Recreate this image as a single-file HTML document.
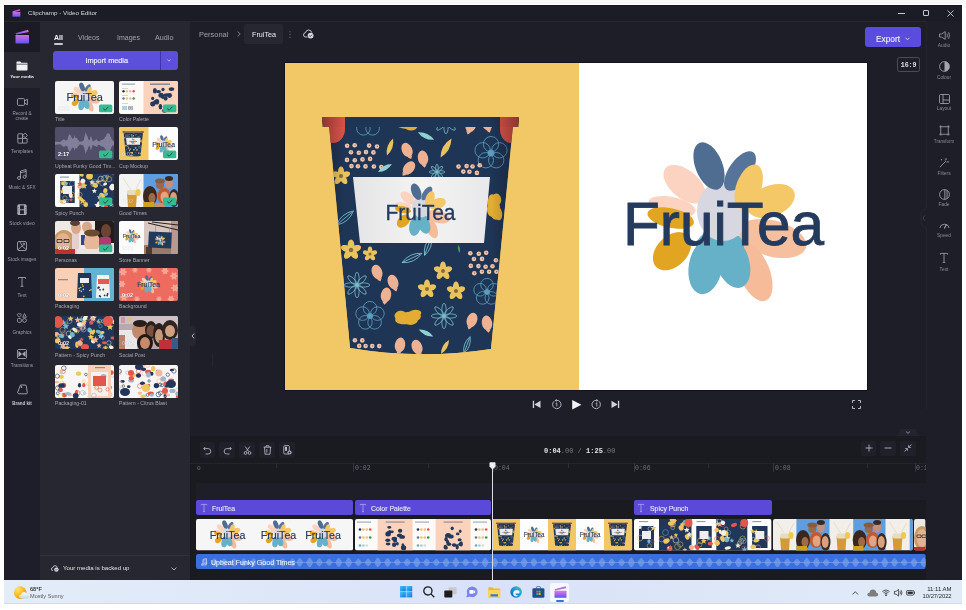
<!DOCTYPE html>
<html><head><meta charset="utf-8">
<style>
*{margin:0;padding:0;box-sizing:border-box}
html,body{width:966px;height:610px;overflow:hidden;background:#ffffff;font-family:"Liberation Sans",sans-serif;position:relative;-webkit-font-smoothing:antialiased}
.t{will-change:transform}
.a{position:absolute}
.t{position:absolute;white-space:nowrap;line-height:1}
svg{position:absolute;overflow:visible;will-change:transform}

</style></head><body>
<!-- window chrome -->
<div class="a" style="left:0;top:0;width:966px;height:4px;background:#f7f7f7"></div>
<div class="a" style="left:4px;top:5px;width:958px;height:575px;background:#1e1e29"></div>
<div class="a" style="left:4px;top:5px;width:958px;height:16px;background:#1c1c27;border-top:1px solid #15151f"></div>
<div class="a" style="left:4px;top:5px;width:1px;height:575px;background:#16161f"></div>
<div class="a" style="left:4px;top:21px;width:922px;height:1px;background:#272732"></div>
<!-- nav -->
<div class="a" style="left:4px;top:22px;width:36px;height:558px;background:#1e1e2a"></div>
<div class="a" style="left:4px;top:22px;width:36px;height:30px;background:#1b1b25"></div>
<div class="a" style="left:4px;top:52px;width:36px;height:36px;background:#282833"></div>
<!-- media panel -->
<div class="a" style="left:40px;top:22px;width:150px;height:558px;background:#272731"></div>
<div class="a" style="left:40px;top:555px;width:150px;height:1px;background:#32323c"></div>
<!-- right panel border -->

<!-- timeline bg -->
<div class="a" style="left:190px;top:436px;width:736px;height:144px;background:#1a1a21"></div>
<div class="a" style="left:190px;top:463px;width:736px;height:1px;background:#24242b"></div>
<!-- taskbar -->
<div class="a" style="left:4px;top:580px;width:958px;height:24px;background:linear-gradient(90deg,#e3edf8,#dde6f8 35%,#d8e1f8 50%,#dde6f7 70%,#e1ebf7);border-bottom:1px solid #d0daf0"></div>

<svg width="0" height="0" style="position:absolute;left:0;top:0"><defs>
<symbol id="flw" viewBox="-90 -90 180 180" overflow="visible">
<ellipse cx="-38.4" cy="-34.7" rx="25" ry="14" transform="rotate(40 -38.4 -34.7)" fill="#fbd3c0"/>
<ellipse cx="-51" cy="-12.5" rx="24" ry="9.5" transform="rotate(12 -51 -12.5)" fill="#fbd3c0"/>
<ellipse cx="49.4" cy="19.5" rx="34.8" ry="18" transform="rotate(15 49.4 19.5)" fill="#f6bf9e"/>
<ellipse cx="31.3" cy="53.1" rx="15.3" ry="30.7" transform="rotate(-22 31.3 53.1)" fill="#f6bb98"/>
<ellipse cx="-52.3" cy="-1" rx="23.7" ry="9.8" transform="rotate(12 -52.3 -1)" fill="#e1a521"/>
<ellipse cx="-51" cy="32.2" rx="15.3" ry="22.3" transform="rotate(45 -51 32.2)" fill="#e1a521"/>
<ellipse cx="-3" cy="28" rx="24" ry="18" fill="#66b0c8"/>
<ellipse cx="-17.5" cy="47.5" rx="16.7" ry="28" transform="rotate(10 -17.5 47.5)" fill="#66b0c8"/>
<ellipse cx="9" cy="42" rx="16.7" ry="28" transform="rotate(-20 9 42)" fill="#66b0c8"/>
<ellipse cx="0" cy="-8" rx="26" ry="30" fill="#d7d7e1"/>
<ellipse cx="-14" cy="-53" rx="13.5" ry="25" transform="rotate(-22 -14 -53)" fill="#4e6d90"/>
<ellipse cx="17" cy="-48" rx="11" ry="23" transform="rotate(35 17 -48)" fill="#56739a"/>
<ellipse cx="25.7" cy="-31.9" rx="12.5" ry="23.7" transform="rotate(20 25.7 -31.9)" fill="#f4c867"/>
<ellipse cx="48" cy="-18" rx="25" ry="15.3" transform="rotate(-22 48 -18)" fill="#f4c867"/>
</symbol>
<symbol id="logo" viewBox="-100 -90 200 180" overflow="visible"><use href="#flw" x="-90" y="-90" width="180" height="180"/><text x="-100" y="25.5" font-family="Liberation Sans" font-size="62" fill="#243b5e" stroke="#243b5e" stroke-width="0.9" textLength="201" lengthAdjust="spacingAndGlyphs">FruiTea</text></symbol>
<symbol id="cup" viewBox="320 115 202 240" overflow="visible"><clipPath id="cupclip"><path d="M329 126 L513 126 L491 349 Q420 360 350 348Z"/></clipPath><linearGradient id="cupshade" x1="0" x2="1"><stop offset="0" stop-color="#000" stop-opacity="0.35"/><stop offset="0.12" stop-color="#000" stop-opacity="0"/><stop offset="0.85" stop-color="#000" stop-opacity="0"/><stop offset="1" stop-color="#000" stop-opacity="0.35"/></linearGradient><linearGradient id="lblg" x1="0" x2="1"><stop offset="0" stop-color="#e4e4e6"/><stop offset="0.5" stop-color="#f4f4f4"/><stop offset="1" stop-color="#e8e8ea"/></linearGradient><g id="cupbody"><g clip-path="url(#cupclip)"><path d="M329 126 L513 126 L491 349 Q420 360 350 348Z" fill="#1f3556"/><ellipse cx="333" cy="129" rx="12" ry="14" fill="#d9534a"/><ellipse cx="511" cy="129" rx="11" ry="14" fill="#d9534a"/><g fill="none" stroke="#5c9cbc" stroke-width="0.85"><circle cx="368.0" cy="114.2" r="6.8"/><circle cx="375.4" cy="119.6" r="6.8"/><circle cx="372.6" cy="128.3" r="6.8"/><circle cx="363.4" cy="128.3" r="6.8"/><circle cx="360.6" cy="119.6" r="6.8"/><circle cx="368" cy="122" r="2.7" fill="#5c9cbc"/></g><g fill="#e2ad32" transform="rotate(0 408 123)"><ellipse cx="408" cy="123" rx="13" ry="6"/><ellipse cx="401" cy="119" rx="6" ry="4.5"/><ellipse cx="415" cy="120" rx="7" ry="4"/><ellipse cx="411" cy="127" rx="6" ry="3.5"/></g><g fill="none" stroke="#7cc0cc" stroke-width="0.8"><ellipse cx="452.5" cy="121.0" rx="6.2" ry="2.1" transform="rotate(0 452.5 121.0)"/><ellipse cx="450.6" cy="125.6" rx="6.2" ry="2.1" transform="rotate(45 450.6 125.6)"/><ellipse cx="446.0" cy="127.5" rx="6.2" ry="2.1" transform="rotate(90 446.0 127.5)"/><ellipse cx="441.4" cy="125.6" rx="6.2" ry="2.1" transform="rotate(135 441.4 125.6)"/><ellipse cx="439.5" cy="121.0" rx="6.2" ry="2.1" transform="rotate(180 439.5 121.0)"/><ellipse cx="441.4" cy="116.4" rx="6.2" ry="2.1" transform="rotate(225 441.4 116.4)"/><ellipse cx="446.0" cy="114.5" rx="6.2" ry="2.1" transform="rotate(270 446.0 114.5)"/><ellipse cx="450.6" cy="116.4" rx="6.2" ry="2.1" transform="rotate(315 450.6 116.4)"/><circle cx="446" cy="121" r="1.6"/></g><g transform="rotate(20 471 125)"><ellipse cx="471" cy="125" rx="5.2" ry="7.5" fill="#eeb293"/><path d="M468.5 132 L471 135 L473.5 132" fill="#eeb293"/></g><g transform="rotate(-15 487 123)"><ellipse cx="487" cy="123" rx="5.2" ry="7.5" fill="#eeb293"/><path d="M484.5 130 L487 133 L489.5 130" fill="#eeb293"/></g><path d="M417 136 Q426 131.05 435 136 Q426 140.95 417 136Z" transform="rotate(25 426 136)" fill="#8fd0d0"/><circle cx="347.1" cy="145.8" r="2.3" fill="#f2c4ac"/><circle cx="347.4" cy="145.6" r="0.7" fill="#9a7060"/><circle cx="354.7" cy="145.3" r="2.3" fill="#f2c4ac"/><circle cx="355.0" cy="145.1" r="0.7" fill="#9a7060"/><circle cx="369.1" cy="145.6" r="2.3" fill="#f2c4ac"/><circle cx="369.4" cy="145.4" r="0.7" fill="#9a7060"/><circle cx="377.0" cy="146.5" r="2.3" fill="#f2c4ac"/><circle cx="377.3" cy="146.3" r="0.7" fill="#9a7060"/><circle cx="351.0" cy="152.2" r="2.3" fill="#f2c4ac"/><circle cx="351.3" cy="152.0" r="0.7" fill="#9a7060"/><circle cx="358.8" cy="152.8" r="2.3" fill="#f2c4ac"/><circle cx="359.1" cy="152.6" r="0.7" fill="#9a7060"/><circle cx="366.0" cy="152.1" r="2.3" fill="#f2c4ac"/><circle cx="366.3" cy="151.9" r="0.7" fill="#9a7060"/><circle cx="373.4" cy="152.4" r="2.3" fill="#f2c4ac"/><circle cx="373.7" cy="152.2" r="0.7" fill="#9a7060"/><circle cx="347.0" cy="159.9" r="2.3" fill="#f2c4ac"/><circle cx="347.3" cy="159.7" r="0.7" fill="#9a7060"/><circle cx="354.8" cy="160.2" r="2.3" fill="#f2c4ac"/><circle cx="355.1" cy="160.0" r="0.7" fill="#9a7060"/><circle cx="362.5" cy="159.4" r="2.3" fill="#f2c4ac"/><circle cx="362.8" cy="159.2" r="0.7" fill="#9a7060"/><circle cx="370.1" cy="158.9" r="2.3" fill="#f2c4ac"/><circle cx="370.4" cy="158.7" r="0.7" fill="#9a7060"/><circle cx="351.5" cy="166.1" r="2.3" fill="#f2c4ac"/><circle cx="351.8" cy="165.9" r="0.7" fill="#9a7060"/><circle cx="357.9" cy="166.3" r="2.3" fill="#f2c4ac"/><circle cx="358.2" cy="166.1" r="0.7" fill="#9a7060"/><circle cx="365.5" cy="166.4" r="2.3" fill="#f2c4ac"/><circle cx="365.8" cy="166.2" r="0.7" fill="#9a7060"/><circle cx="373.9" cy="166.5" r="2.3" fill="#f2c4ac"/><circle cx="374.2" cy="166.3" r="0.7" fill="#9a7060"/><circle cx="381.3" cy="167.0" r="2.3" fill="#f2c4ac"/><circle cx="381.6" cy="166.8" r="0.7" fill="#9a7060"/><path d="M381 147 Q390 142.05 399 147 Q390 151.95 381 147Z" transform="rotate(-70 390 147)" fill="#e9c35c"/><g transform="rotate(-25 407 150)"><ellipse cx="407" cy="150" rx="5.2" ry="7.5" fill="#eeb293"/><path d="M404.5 157 L407 160 L409.5 157" fill="#eeb293"/></g><g transform="rotate(-10 423 158)"><ellipse cx="423" cy="158" rx="5.2" ry="7.5" fill="#eeb293"/><path d="M420.5 165 L423 168 L425.5 165" fill="#eeb293"/></g><g transform="rotate(40 409 168)"><ellipse cx="409" cy="168" rx="5.2" ry="7.5" fill="#eeb293"/><path d="M406.5 175 L409 178 L411.5 175" fill="#eeb293"/></g><path d="M435 148 Q446 141.95 457 148 Q446 154.05 435 148Z" transform="rotate(-60 446 148)" fill="#e9c35c"/><g fill="none" stroke="#5c9cbc" stroke-width="0.85"><circle cx="491.0" cy="144.2" r="7.7"/><circle cx="499.4" cy="150.3" r="7.7"/><circle cx="496.2" cy="160.2" r="7.7"/><circle cx="485.8" cy="160.2" r="7.7"/><circle cx="482.6" cy="150.3" r="7.7"/><circle cx="491" cy="153" r="3.1" fill="#5c9cbc"/></g><path d="M377 168 Q385 163.6 393 168 Q385 172.4 377 168Z" transform="rotate(-30 385 168)" fill="#8fd0d0"/><ellipse cx="341.0" cy="171.5" rx="5.0" ry="3.0" transform="rotate(-90 341.0 171.5)" fill="#e9c35c"/><ellipse cx="345.3" cy="174.6" rx="5.0" ry="3.0" transform="rotate(-18 345.3 174.6)" fill="#e9c35c"/><ellipse cx="343.6" cy="179.6" rx="5.0" ry="3.0" transform="rotate(54 343.6 179.6)" fill="#e9c35c"/><ellipse cx="338.4" cy="179.6" rx="5.0" ry="3.0" transform="rotate(126 338.4 179.6)" fill="#e9c35c"/><ellipse cx="336.7" cy="174.6" rx="5.0" ry="3.0" transform="rotate(198 336.7 174.6)" fill="#e9c35c"/><circle cx="341" cy="176" r="2.0" fill="#8a6a3a"/><circle cx="458.5" cy="166.6" r="2.3" fill="#f2c4ac"/><circle cx="458.8" cy="166.4" r="0.7" fill="#9a7060"/><circle cx="466.6" cy="166.1" r="2.3" fill="#f2c4ac"/><circle cx="466.9" cy="165.9" r="0.7" fill="#9a7060"/><circle cx="472.5" cy="166.5" r="2.3" fill="#f2c4ac"/><circle cx="472.8" cy="166.3" r="0.7" fill="#9a7060"/><circle cx="479.7" cy="165.3" r="2.3" fill="#f2c4ac"/><circle cx="480.0" cy="165.1" r="0.7" fill="#9a7060"/><circle cx="463.3" cy="171.6" r="2.3" fill="#f2c4ac"/><circle cx="463.6" cy="171.4" r="0.7" fill="#9a7060"/><circle cx="469.4" cy="171.7" r="2.3" fill="#f2c4ac"/><circle cx="469.7" cy="171.5" r="0.7" fill="#9a7060"/><circle cx="476.9" cy="172.9" r="2.3" fill="#f2c4ac"/><circle cx="477.2" cy="172.7" r="0.7" fill="#9a7060"/><g fill="none" stroke="#7cc0cc" stroke-width="0.8"><ellipse cx="441.0" cy="172.0" rx="3.8" ry="1.3" transform="rotate(0 441.0 172.0)"/><ellipse cx="439.8" cy="174.8" rx="3.8" ry="1.3" transform="rotate(45 439.8 174.8)"/><ellipse cx="437.0" cy="176.0" rx="3.8" ry="1.3" transform="rotate(90 437.0 176.0)"/><ellipse cx="434.2" cy="174.8" rx="3.8" ry="1.3" transform="rotate(135 434.2 174.8)"/><ellipse cx="433.0" cy="172.0" rx="3.8" ry="1.3" transform="rotate(180 433.0 172.0)"/><ellipse cx="434.2" cy="169.2" rx="3.8" ry="1.3" transform="rotate(225 434.2 169.2)"/><ellipse cx="437.0" cy="168.0" rx="3.8" ry="1.3" transform="rotate(270 437.0 168.0)"/><ellipse cx="439.8" cy="169.2" rx="3.8" ry="1.3" transform="rotate(315 439.8 169.2)"/><circle cx="437" cy="172" r="1.0"/></g><g fill="#e2ad32" transform="rotate(80 494 207)"><ellipse cx="494" cy="207" rx="13" ry="6"/><ellipse cx="487" cy="203" rx="6" ry="4.5"/><ellipse cx="501" cy="204" rx="7" ry="4"/><ellipse cx="497" cy="211" rx="6" ry="3.5"/></g><path d="M334 218 Q345 211.95 356 218 Q345 224.05 334 218Z M334 218 H353.8" transform="rotate(-40 345 218)" fill="none" stroke="#7cc0cc" stroke-width="0.8"/><ellipse cx="351.0" cy="245.0" rx="5.5" ry="3.3" transform="rotate(-90 351.0 245.0)" fill="#e9c35c"/><ellipse cx="355.8" cy="248.5" rx="5.5" ry="3.3" transform="rotate(-18 355.8 248.5)" fill="#e9c35c"/><ellipse cx="353.9" cy="254.0" rx="5.5" ry="3.3" transform="rotate(54 353.9 254.0)" fill="#e9c35c"/><ellipse cx="348.1" cy="254.0" rx="5.5" ry="3.3" transform="rotate(126 348.1 254.0)" fill="#e9c35c"/><ellipse cx="346.2" cy="248.5" rx="5.5" ry="3.3" transform="rotate(198 346.2 248.5)" fill="#e9c35c"/><circle cx="351" cy="250" r="2.2" fill="#8a6a3a"/><ellipse cx="370.0" cy="250.5" rx="3.9" ry="2.3" transform="rotate(-90 370.0 250.5)" fill="#e9c35c"/><ellipse cx="373.3" cy="252.9" rx="3.9" ry="2.3" transform="rotate(-18 373.3 252.9)" fill="#e9c35c"/><ellipse cx="372.1" cy="256.8" rx="3.9" ry="2.3" transform="rotate(54 372.1 256.8)" fill="#e9c35c"/><ellipse cx="367.9" cy="256.8" rx="3.9" ry="2.3" transform="rotate(126 367.9 256.8)" fill="#e9c35c"/><ellipse cx="366.7" cy="252.9" rx="3.9" ry="2.3" transform="rotate(198 366.7 252.9)" fill="#e9c35c"/><circle cx="370" cy="254" r="1.5" fill="#8a6a3a"/><path d="M401 258 Q412 251.95 423 258 Q412 264.05 401 258Z M401 258 H420.8" transform="rotate(-25 412 258)" fill="none" stroke="#7cc0cc" stroke-width="0.8"/><path d="M418 246 Q428 240.5 438 246 Q428 251.5 418 246Z M418 246 H436.0" transform="rotate(-70 428 246)" fill="none" stroke="#7cc0cc" stroke-width="0.8"/><path d="M455 249 Q459 246.8 463 249 Q459 251.2 455 249Z" transform="rotate(80 459 249)" fill="#3aa050"/><circle cx="470.3" cy="253.3" r="2.3" fill="#f2c4ac"/><circle cx="470.6" cy="253.1" r="0.7" fill="#9a7060"/><circle cx="478.8" cy="253.8" r="2.3" fill="#f2c4ac"/><circle cx="479.1" cy="253.6" r="0.7" fill="#9a7060"/><circle cx="486.2" cy="252.7" r="2.3" fill="#f2c4ac"/><circle cx="486.5" cy="252.5" r="0.7" fill="#9a7060"/><circle cx="473.9" cy="259.0" r="2.3" fill="#f2c4ac"/><circle cx="474.2" cy="258.8" r="0.7" fill="#9a7060"/><circle cx="482.0" cy="258.9" r="2.3" fill="#f2c4ac"/><circle cx="482.3" cy="258.7" r="0.7" fill="#9a7060"/><circle cx="495.9" cy="260.2" r="2.3" fill="#f2c4ac"/><circle cx="496.2" cy="260.0" r="0.7" fill="#9a7060"/><circle cx="470.8" cy="265.9" r="2.3" fill="#f2c4ac"/><circle cx="471.1" cy="265.7" r="0.7" fill="#9a7060"/><circle cx="478.4" cy="266.1" r="2.3" fill="#f2c4ac"/><circle cx="478.7" cy="265.9" r="0.7" fill="#9a7060"/><circle cx="485.6" cy="266.7" r="2.3" fill="#f2c4ac"/><circle cx="485.9" cy="266.5" r="0.7" fill="#9a7060"/><circle cx="492.5" cy="266.3" r="2.3" fill="#f2c4ac"/><circle cx="492.8" cy="266.1" r="0.7" fill="#9a7060"/><circle cx="474.3" cy="273.2" r="2.3" fill="#f2c4ac"/><circle cx="474.6" cy="273.0" r="0.7" fill="#9a7060"/><circle cx="481.9" cy="271.7" r="2.3" fill="#f2c4ac"/><circle cx="482.2" cy="271.5" r="0.7" fill="#9a7060"/><circle cx="489.1" cy="271.7" r="2.3" fill="#f2c4ac"/><circle cx="489.4" cy="271.5" r="0.7" fill="#9a7060"/><circle cx="496.4" cy="271.7" r="2.3" fill="#f2c4ac"/><circle cx="496.7" cy="271.5" r="0.7" fill="#9a7060"/><g transform="rotate(-20 377 272)"><ellipse cx="377" cy="272" rx="5.2" ry="7.5" fill="#eeb293"/><path d="M374.5 279 L377 282 L379.5 279" fill="#eeb293"/></g><g transform="rotate(-20 393 282)"><ellipse cx="393" cy="282" rx="5.2" ry="7.5" fill="#eeb293"/><path d="M390.5 289 L393 292 L395.5 289" fill="#eeb293"/></g><g transform="rotate(10 386 295)"><ellipse cx="386" cy="295" rx="5.2" ry="7.5" fill="#eeb293"/><path d="M383.5 302 L386 305 L388.5 302" fill="#eeb293"/></g><ellipse cx="443.0" cy="266.5" rx="5.0" ry="3.0" transform="rotate(-90 443.0 266.5)" fill="#e9c35c"/><ellipse cx="447.3" cy="269.6" rx="5.0" ry="3.0" transform="rotate(-18 447.3 269.6)" fill="#e9c35c"/><ellipse cx="445.6" cy="274.6" rx="5.0" ry="3.0" transform="rotate(54 445.6 274.6)" fill="#e9c35c"/><ellipse cx="440.4" cy="274.6" rx="5.0" ry="3.0" transform="rotate(126 440.4 274.6)" fill="#e9c35c"/><ellipse cx="438.7" cy="269.6" rx="5.0" ry="3.0" transform="rotate(198 438.7 269.6)" fill="#e9c35c"/><circle cx="443" cy="271" r="2.0" fill="#8a6a3a"/><ellipse cx="427.0" cy="284.5" rx="5.0" ry="3.0" transform="rotate(-90 427.0 284.5)" fill="#e9c35c"/><ellipse cx="431.3" cy="287.6" rx="5.0" ry="3.0" transform="rotate(-18 431.3 287.6)" fill="#e9c35c"/><ellipse cx="429.6" cy="292.6" rx="5.0" ry="3.0" transform="rotate(54 429.6 292.6)" fill="#e9c35c"/><ellipse cx="424.4" cy="292.6" rx="5.0" ry="3.0" transform="rotate(126 424.4 292.6)" fill="#e9c35c"/><ellipse cx="422.7" cy="287.6" rx="5.0" ry="3.0" transform="rotate(198 422.7 287.6)" fill="#e9c35c"/><circle cx="427" cy="289" r="2.0" fill="#8a6a3a"/><ellipse cx="456.0" cy="286.5" rx="5.0" ry="3.0" transform="rotate(-90 456.0 286.5)" fill="#e9c35c"/><ellipse cx="460.3" cy="289.6" rx="5.0" ry="3.0" transform="rotate(-18 460.3 289.6)" fill="#e9c35c"/><ellipse cx="458.6" cy="294.6" rx="5.0" ry="3.0" transform="rotate(54 458.6 294.6)" fill="#e9c35c"/><ellipse cx="453.4" cy="294.6" rx="5.0" ry="3.0" transform="rotate(126 453.4 294.6)" fill="#e9c35c"/><ellipse cx="451.7" cy="289.6" rx="5.0" ry="3.0" transform="rotate(198 451.7 289.6)" fill="#e9c35c"/><circle cx="456" cy="291" r="2.0" fill="#8a6a3a"/><g fill="none" stroke="#7cc0cc" stroke-width="0.8"><ellipse cx="363.5" cy="285.0" rx="6.2" ry="2.1" transform="rotate(0 363.5 285.0)"/><ellipse cx="361.6" cy="289.6" rx="6.2" ry="2.1" transform="rotate(45 361.6 289.6)"/><ellipse cx="357.0" cy="291.5" rx="6.2" ry="2.1" transform="rotate(90 357.0 291.5)"/><ellipse cx="352.4" cy="289.6" rx="6.2" ry="2.1" transform="rotate(135 352.4 289.6)"/><ellipse cx="350.5" cy="285.0" rx="6.2" ry="2.1" transform="rotate(180 350.5 285.0)"/><ellipse cx="352.4" cy="280.4" rx="6.2" ry="2.1" transform="rotate(225 352.4 280.4)"/><ellipse cx="357.0" cy="278.5" rx="6.2" ry="2.1" transform="rotate(270 357.0 278.5)"/><ellipse cx="361.6" cy="280.4" rx="6.2" ry="2.1" transform="rotate(315 361.6 280.4)"/><circle cx="357" cy="285" r="1.6"/></g><g fill="none" stroke="#5c9cbc" stroke-width="0.85"><circle cx="487.0" cy="284.7" r="6.3"/><circle cx="493.9" cy="289.8" r="6.3"/><circle cx="491.3" cy="297.9" r="6.3"/><circle cx="482.7" cy="297.9" r="6.3"/><circle cx="480.1" cy="289.8" r="6.3"/><circle cx="487" cy="292" r="2.5" fill="#5c9cbc"/></g><g fill="none" stroke="#5c9cbc" stroke-width="0.85"><circle cx="370.0" cy="308.2" r="6.8"/><circle cx="377.4" cy="313.6" r="6.8"/><circle cx="374.6" cy="322.3" r="6.8"/><circle cx="365.4" cy="322.3" r="6.8"/><circle cx="362.6" cy="313.6" r="6.8"/><circle cx="370" cy="316" r="2.7" fill="#5c9cbc"/></g><g fill="#e2ad32" transform="rotate(-10 408 318)"><ellipse cx="408" cy="318" rx="13" ry="6"/><ellipse cx="401" cy="314" rx="6" ry="4.5"/><ellipse cx="415" cy="315" rx="7" ry="4"/><ellipse cx="411" cy="322" rx="6" ry="3.5"/></g><g fill="none" stroke="#7cc0cc" stroke-width="0.8"><ellipse cx="450.5" cy="316.0" rx="6.2" ry="2.1" transform="rotate(0 450.5 316.0)"/><ellipse cx="448.6" cy="320.6" rx="6.2" ry="2.1" transform="rotate(45 448.6 320.6)"/><ellipse cx="444.0" cy="322.5" rx="6.2" ry="2.1" transform="rotate(90 444.0 322.5)"/><ellipse cx="439.4" cy="320.6" rx="6.2" ry="2.1" transform="rotate(135 439.4 320.6)"/><ellipse cx="437.5" cy="316.0" rx="6.2" ry="2.1" transform="rotate(180 437.5 316.0)"/><ellipse cx="439.4" cy="311.4" rx="6.2" ry="2.1" transform="rotate(225 439.4 311.4)"/><ellipse cx="444.0" cy="309.5" rx="6.2" ry="2.1" transform="rotate(270 444.0 309.5)"/><ellipse cx="448.6" cy="311.4" rx="6.2" ry="2.1" transform="rotate(315 448.6 311.4)"/><circle cx="444" cy="316" r="1.6"/></g><g transform="rotate(20 472 320)"><ellipse cx="472" cy="320" rx="5.2" ry="7.5" fill="#eeb293"/><path d="M469.5 327 L472 330 L474.5 327" fill="#eeb293"/></g><g transform="rotate(-10 487 323)"><ellipse cx="487" cy="323" rx="5.2" ry="7.5" fill="#eeb293"/><path d="M484.5 330 L487 333 L489.5 330" fill="#eeb293"/></g><circle cx="354.9" cy="340.3" r="2.3" fill="#f2c4ac"/><circle cx="355.2" cy="340.1" r="0.7" fill="#9a7060"/><circle cx="362.3" cy="340.4" r="2.3" fill="#f2c4ac"/><circle cx="362.6" cy="340.2" r="0.7" fill="#9a7060"/><circle cx="359.2" cy="345.9" r="2.3" fill="#f2c4ac"/><circle cx="359.5" cy="345.7" r="0.7" fill="#9a7060"/><circle cx="365.6" cy="346.0" r="2.3" fill="#f2c4ac"/><circle cx="365.9" cy="345.8" r="0.7" fill="#9a7060"/><circle cx="372.2" cy="346.1" r="2.3" fill="#f2c4ac"/><circle cx="372.5" cy="345.9" r="0.7" fill="#9a7060"/><circle cx="379.2" cy="346.1" r="2.3" fill="#f2c4ac"/><circle cx="379.5" cy="345.9" r="0.7" fill="#9a7060"/><g transform="rotate(10 400 345)"><ellipse cx="400" cy="345" rx="5.2" ry="7.5" fill="#eeb293"/><path d="M397.5 352 L400 355 L402.5 352" fill="#eeb293"/></g><g transform="rotate(-20 417 347)"><ellipse cx="417" cy="347" rx="5.2" ry="7.5" fill="#eeb293"/><path d="M414.5 354 L417 357 L419.5 354" fill="#eeb293"/></g><path d="M418 333 Q426 328.6 434 333 Q426 337.4 418 333Z" transform="rotate(25 426 333)" fill="#8fd0d0"/><path d="M437 347 Q445 342.6 453 347 Q445 351.4 437 347Z" transform="rotate(-60 445 347)" fill="#e9c35c"/><path d="M458 345 Q467 340.05 476 345 Q467 349.95 458 345Z M458 345 H474.2" transform="rotate(-70 467 345)" fill="none" stroke="#7cc0cc" stroke-width="0.8"/><rect x="320" y="115" width="202" height="245" fill="url(#cupshade)"/></g><path d="M322 119 Q322 117 324 117 L517 117 Q519 117 519 119 L518 125 Q518 127 516 127 L326 127 Q323 127 323 125Z" fill="#1f3556"/><path d="M322 119 Q322 117 324 117 L345 117 L345 127 L326 127 Q323 127 323 125Z" fill="#d9534a"/><path d="M500 117 L517 117 Q519 117 519 119 L518 125 Q518 127 516 127 L500 127Z" fill="#d9534a"/><rect x="322" y="117" width="197" height="10" fill="url(#cupshade)"/><path d="M353 177 L490 177 L484 243 L360 243Z" fill="url(#lblg)"/><use href="#flw" x="390" y="179" width="62" height="62"/><text x="385.5" y="220.3" font-family="Liberation Sans" font-size="22.5" fill="#243b5e" stroke="#243b5e" stroke-width="0.3" textLength="70" lengthAdjust="spacingAndGlyphs">FruiTea</text></g></symbol>
</defs></svg>
<!-- title bar content -->
<svg style="left:12px;top:9px" width="9" height="8" viewBox="0 0 9 8">
  <defs><linearGradient id="lg1" x1="0" y1="0" x2="0" y2="1"><stop offset="0" stop-color="#d26be6"/><stop offset="1" stop-color="#6b55f0"/></linearGradient></defs>
  <path d="M0.5 2.2 L7.8 0.3 L8.3 1.6 L1 3.4Z" fill="#c46ae8"/>
  <rect x="0.5" y="3" width="7.8" height="4.7" fill="url(#lg1)"/>
</svg>
<div class="t" style="left:28px;top:10px;font-size:6.25px;color:#d8d8de">Clipchamp - Video Editor</div>
<div class="a" style="left:898px;top:12.5px;width:7px;height:1px;background:#c8c8d0"></div>
<div class="a" style="left:923px;top:10px;width:6px;height:6px;border:1px solid #c8c8d0;border-radius:1px"></div>
<svg style="left:947px;top:10px" width="7" height="7" viewBox="0 0 7 7"><path d="M0.5 0.5L6.5 6.5M6.5 0.5L0.5 6.5" stroke="#d0d0d8" stroke-width="0.9"/></svg>

<!-- nav logo -->
<svg style="left:15px;top:29px" width="15" height="15" viewBox="0 0 15 15">
  <defs><linearGradient id="lg2" x1="0" y1="0" x2="0" y2="1"><stop offset="0" stop-color="#c86fe0"/><stop offset="0.5" stop-color="#a060e8"/><stop offset="1" stop-color="#5e54ee"/></linearGradient>
  <linearGradient id="lg3" x1="0" y1="0" x2="1" y2="0"><stop offset="0" stop-color="#7a58ea"/><stop offset="1" stop-color="#d070e6"/></linearGradient></defs>
  <path d="M0.5 4.2 L13 0.8 L13.8 3 L1.2 5.6Z" fill="url(#lg3)"/>
  <rect x="0.5" y="6" width="13.5" height="8.5" rx="0.6" fill="url(#lg2)"/>
</svg>

<!-- your media -->
<svg style="left:16px;top:61px" width="12" height="10" viewBox="0 0 12 10">
  <path d="M0.5 1.2 Q0.5 0.5 1.2 0.5 H4.3 L5.5 1.8 H10.8 Q11.5 1.8 11.5 2.5 V8.8 Q11.5 9.5 10.8 9.5 H1.2 Q0.5 9.5 0.5 8.8Z" fill="#f2f2f6"/>
  <path d="M0.5 3.2 H11.5" stroke="#282833" stroke-width="0.7"/>
</svg>
<div class="t" style="left:9px;top:74.6px;width:26px;text-align:center;font-size:4.4px;font-weight:700;color:#f0f0f4">Your media</div>

<!-- record -->
<svg style="left:16.5px;top:97.5px" width="11" height="8" viewBox="0 0 11 8" fill="none" stroke="#a9a9b5" stroke-width="0.85">
  <rect x="0.5" y="0.6" width="7" height="6.8" rx="1"/>
  <path d="M7.5 3 L10.4 1.2 V6.8 L7.5 5"/>
</svg>
<div class="t" style="left:4px;top:111.7px;width:36px;text-align:center;font-size:4.6px;color:#9c9ca8">Record &amp;</div>
<div class="t" style="left:4px;top:116.5px;width:36px;text-align:center;font-size:4.6px;color:#9c9ca8">create</div>

<!-- templates -->
<svg style="left:16.5px;top:133px" width="11" height="11" viewBox="0 0 11 11" fill="none" stroke="#a9a9b5" stroke-width="0.85">
  <path d="M1.6 0.8 H5.5 V5.4 H10.1 V9.3 Q10.1 10.1 9.3 10.1 H1.6 Q0.8 10.1 0.8 9.3 V1.6 Q0.8 0.8 1.6 0.8Z M0.8 5.4 H5.5 V10.1"/>
  <path d="M8.1 0.1 L10.4 2.4 L8.1 4.7 L5.8 2.4Z"/>
</svg>
<div class="t" style="left:4px;top:149.9px;width:36px;text-align:center;font-size:4.8px;color:#9c9ca8">Templates</div>

<!-- music -->
<svg style="left:17px;top:168.5px" width="10" height="11" viewBox="0 0 10 11" fill="none" stroke="#a9a9b5" stroke-width="0.85">
  <circle cx="2" cy="9" r="1.5"/><circle cx="7.6" cy="7.8" r="1.5"/>
  <path d="M3.5 9 V2 L9.1 0.6 V7.8 M3.5 3.8 L9.1 2.4"/>
</svg>
<div class="t" style="left:4px;top:186.2px;width:36px;text-align:center;font-size:4.7px;color:#9c9ca8">Music &amp; SFX</div>

<!-- stock video -->
<svg style="left:17px;top:204px" width="10" height="11.5" viewBox="0 0 10 11.5">
  <rect x="0.3" y="0.3" width="9.4" height="10.8" rx="1.6" fill="#a9a9b5"/>
  <rect x="3.1" y="1.4" width="3.8" height="3.9" fill="#1e1e2a"/><rect x="3.1" y="6.2" width="3.8" height="3.9" fill="#1e1e2a"/>
  <path d="M0.6 3.5 H2.2 M0.6 5.7 H2.2 M0.6 7.9 H2.2 M7.8 3.5 H9.4 M7.8 5.7 H9.4 M7.8 7.9 H9.4" stroke="#5a5a66" stroke-width="0.5"/>
</svg>
<div class="t" style="left:4px;top:221.8px;width:36px;text-align:center;font-size:4.9px;color:#9c9ca8">Stock video</div>

<!-- stock images -->
<svg style="left:17px;top:240.7px" width="10" height="10" viewBox="0 0 10 10" fill="none" stroke="#a9a9b5" stroke-width="0.85">
  <rect x="0.5" y="0.5" width="9" height="9" rx="1.5"/>
  <path d="M0.8 8.8 L5 5 L9.2 8.5"/><circle cx="6.8" cy="3" r="0.9"/>
  <path d="M3 1 L5.5 5"/>
</svg>
<div class="t" style="left:4px;top:257.5px;width:36px;text-align:center;font-size:4.8px;color:#9c9ca8">Stock images</div>

<!-- text -->
<svg style="left:18px;top:277px" width="8" height="10" viewBox="0 0 8 10" fill="none" stroke="#a9a9b5" stroke-width="0.85">
  <path d="M0.5 1.8 V0.5 H7.5 V1.8 M4 0.5 V9.3 M2.6 9.3 H5.4"/>
</svg>
<div class="t" style="left:4px;top:293.6px;width:36px;text-align:center;font-size:4.9px;color:#9c9ca8">Text</div>

<!-- graphics -->
<svg style="left:17px;top:312.5px" width="10" height="10" viewBox="0 0 10 10" fill="none" stroke="#a9a9b5" stroke-width="0.8">
  <path d="M2.3 4.2 L0.6 2.3 A1 1 0 0 1 2.3 1 A1 1 0 0 1 4 2.3Z"/>
  <path d="M7.5 0.6 L9.3 4.2 H5.7Z"/>
  <rect x="0.5" y="5.5" width="3.8" height="3.8" rx="1"/>
  <circle cx="7.5" cy="7.4" r="1.9"/>
</svg>
<div class="t" style="left:4px;top:330.6px;width:36px;text-align:center;font-size:4.8px;color:#9c9ca8">Graphics</div>

<!-- transitions -->
<svg style="left:17px;top:348.5px" width="10" height="10" viewBox="0 0 10 10">
  <rect x="0.5" y="0.5" width="9" height="9" rx="1" fill="none" stroke="#a9a9b5" stroke-width="0.85"/>
  <path d="M1.5 2 L5 5 L1.5 8Z M8.5 2 L5 5 L8.5 8Z" fill="#a9a9b5"/>
</svg>
<div class="t" style="left:4px;top:363.6px;width:36px;text-align:center;font-size:4.6px;color:#9c9ca8">Transitions</div>

<!-- brand kit -->
<svg style="left:16.5px;top:384px" width="11" height="11" viewBox="0 0 11 11" fill="none" stroke="#b4b4c0" stroke-width="0.85">
  <path d="M3.5 1 H8.2 Q9 1 9.3 2 L10.3 8.8 Q10.3 9.8 9.3 9.8 H4 Q3.2 9.8 3.1 9"/>
  <path d="M3.5 1 L0.7 8.3 Q0.5 9.3 1.5 9.6 L3.1 10"/>
  <circle cx="4.5" cy="3" r="0.5" fill="#b4b4c0"/>
</svg>
<div class="t" style="left:4px;top:402.4px;width:36px;text-align:center;font-size:4.5px;font-weight:700;color:#c8c8d2">Brand kit</div>

<div class="t" style="left:54px;top:33.8px;font-size:7px;font-weight:700;color:#f2f2f6">All</div>
<div class="a" style="left:54px;top:43px;width:8.5px;height:1.5px;border-radius:1px;background:#c9c9d2"></div>
<div class="t" style="left:78.4px;top:33.8px;font-size:7.05px;color:#a3a3ae">Videos</div>
<div class="t" style="left:117px;top:33.8px;font-size:7px;color:#a3a3ae">Images</div>
<div class="t" style="left:155px;top:33.8px;font-size:7.2px;color:#a3a3ae">Audio</div>
<div class="a" style="left:52.5px;top:50.7px;width:125.2px;height:19.8px;border-radius:3px;background:#5b4fdb"></div>
<div class="a" style="left:160px;top:50.7px;width:0.8px;height:19.8px;background:#3f35a8"></div>
<div class="t" style="left:52.5px;top:56.6px;width:107.5px;text-align:center;font-size:7.3px;color:#f4f4fb;-webkit-text-stroke:0.15px #f4f4fb">Import media</div>
<svg style="left:166.5px;top:59px" width="4" height="3" viewBox="0 0 4 3"><path d="M0.4 0.5 L2 2.2 L3.6 0.5" fill="none" stroke="#e8e8f4" stroke-width="0.7"/></svg>
<svg style="left:55.3px;top:80.5px" width="59" height="33" viewBox="0 0 59 33"><defs><clipPath id="tc0"><rect width="59" height="33" rx="2"/></clipPath></defs><g clip-path="url(#tc0)"><rect width="59" height="33" fill="#f6f6f6"/><use href="#logo" x="11.46" y="-0.73" width="36.29" height="32.66"/><text x="3" y="29.3" font-family="Liberation Sans" font-size="5.6" font-weight="700" fill="#ffffff" opacity="0.35" style="paint-order:stroke" stroke="#000" stroke-opacity="0.25" stroke-width="0.6">0:02</text><rect x="44" y="23.6" width="13.3" height="7.7" rx="1.6" fill="#33bb92"/><path d="M48.2 27.6 L50.1 29.3 L53.4 25.7" fill="none" stroke="#1b3a30" stroke-width="0.8"/></g></svg>
<div class="t" style="left:55.3px;top:116.7px;font-size:5.2px;color:#a7a7b3">Title</div>
<svg style="left:119.4px;top:80.5px" width="59" height="33" viewBox="0 0 59 33"><defs><clipPath id="tc1"><rect width="59" height="33" rx="2"/></clipPath></defs><g clip-path="url(#tc1)"><rect width="59" height="33" fill="#fdfaf7"/><rect x="24.5" width="35" height="33" fill="#fbd2bc"/><rect x="3" y="2.5" width="13" height="1.3" fill="#9bb0c8"/><rect x="31" y="2.5" width="20" height="1.3" fill="#6c7e9a"/><rect x="3" y="7" width="6" height="0.8" fill="#c8ccd6"/><circle cx="4.5" cy="10.3" r="1.2" fill="#20365a"/><circle cx="7.9" cy="10.3" r="1.2" fill="#efc75e"/><circle cx="11.3" cy="10.3" r="1.2" fill="#f4b89a"/><circle cx="14.7" cy="10.3" r="1.2" fill="#e2574a"/><rect x="3" y="14" width="6" height="0.8" fill="#c8ccd6"/><circle cx="4.5" cy="17.5" r="1.2" fill="#5a7aa0"/><circle cx="7.9" cy="17.5" r="1.2" fill="#efc75e"/><circle cx="11.3" cy="17.5" r="1.2" fill="#f4b89a"/><circle cx="14.7" cy="17.5" r="1.2" fill="#2f9a4a"/><rect x="3" y="22" width="6" height="0.8" fill="#c8ccd6"/><rect x="3" y="25" width="5" height="4" fill="#6fb3cc" opacity="0.6"/><rect x="9" y="25" width="5" height="4" fill="#20365a" opacity="0.4"/><ellipse cx="39.5" cy="10.6" rx="2.5" ry="1.6" fill="#22385c"/><ellipse cx="43.7" cy="15.8" rx="1.6" ry="2.3" fill="#22385c"/><ellipse cx="33.7" cy="17.4" rx="1.6" ry="1.6" fill="#22385c"/><ellipse cx="41.5" cy="26.8" rx="1.7" ry="1.8" fill="#22385c"/><ellipse cx="45.5" cy="29.7" rx="2.4" ry="2.1" fill="#22385c"/><ellipse cx="52.5" cy="8.1" rx="2.8" ry="1.9" fill="#22385c"/><ellipse cx="35.9" cy="9.8" rx="2.0" ry="2.7" fill="#22385c"/><ellipse cx="36.6" cy="21.0" rx="2.5" ry="2.1" fill="#22385c"/><ellipse cx="44.0" cy="8.5" rx="1.6" ry="1.8" fill="#22385c"/><ellipse cx="46.6" cy="17.3" rx="2.0" ry="2.4" fill="#22385c"/><ellipse cx="42.1" cy="14.2" rx="2.7" ry="2.5" fill="#22385c"/><ellipse cx="37.9" cy="20.8" rx="2.3" ry="2.8" fill="#22385c"/><ellipse cx="47.6" cy="13.9" rx="3.0" ry="1.7" fill="#22385c"/><ellipse cx="41.4" cy="25.2" rx="1.7" ry="2.2" fill="#22385c"/><ellipse cx="33.8" cy="23.0" rx="2.6" ry="2.4" fill="#22385c"/><ellipse cx="50.5" cy="14.5" rx="2.5" ry="2.4" fill="#22385c"/><text x="3" y="29.3" font-family="Liberation Sans" font-size="5.6" font-weight="700" fill="#ffffff" opacity="0.35" style="paint-order:stroke" stroke="#000" stroke-opacity="0.25" stroke-width="0.6">0:02</text><rect x="44" y="23.6" width="13.3" height="7.7" rx="1.6" fill="#33bb92"/><path d="M48.2 27.6 L50.1 29.3 L53.4 25.7" fill="none" stroke="#1b3a30" stroke-width="0.8"/></g></svg>
<div class="t" style="left:119.4px;top:116.7px;font-size:5.2px;color:#a7a7b3">Color Palette</div>
<svg style="left:55.3px;top:127.1px" width="59" height="33" viewBox="0 0 59 33"><defs><clipPath id="tc2"><rect width="59" height="33" rx="2"/></clipPath></defs><g clip-path="url(#tc2)"><rect width="59" height="33" fill="#504e69"/><polygon points="0.0,14.8 0.5,14.4 1.0,14.7 1.5,15.0 2.0,14.5 2.5,14.7 3.0,14.8 3.5,15.1 4.0,15.1 4.5,14.9 5.0,15.0 5.5,14.6 6.0,14.8 6.5,14.0 7.0,13.4 7.5,13.5 8.0,12.5 8.5,12.5 9.0,12.6 9.5,12.5 10.0,12.9 10.5,13.5 11.0,13.5 11.5,13.2 12.0,13.1 12.5,12.8 13.0,10.5 13.5,8.8 14.0,8.3 14.5,6.8 15.0,7.9 15.5,7.9 16.0,9.1 16.5,10.4 17.0,11.2 17.5,11.4 18.0,12.0 18.5,11.1 19.0,10.5 19.5,8.0 20.0,9.5 20.5,11.0 21.0,11.1 21.5,11.1 22.0,10.6 22.5,12.0 23.0,13.0 23.5,13.1 24.0,13.9 24.5,14.8 25.0,14.8 25.5,14.6 26.0,15.0 26.5,14.4 27.0,14.3 27.5,14.1 28.0,14.0 28.5,13.5 29.0,12.1 29.5,9.6 30.0,7.9 30.5,5.0 31.0,6.2 31.5,7.5 32.0,8.8 32.5,9.0 33.0,11.4 33.5,12.5 34.0,13.7 34.5,12.8 35.0,11.9 35.5,10.0 36.0,9.1 36.5,10.3 37.0,11.7 37.5,13.7 38.0,14.6 38.5,13.9 39.0,14.0 39.5,13.2 40.0,13.1 40.5,13.4 41.0,12.2 41.5,12.3 42.0,12.8 42.5,13.6 43.0,14.2 43.5,14.3 44.0,14.5 44.5,14.3 45.0,14.2 45.5,13.4 46.0,13.0 46.5,12.9 47.0,13.1 47.5,12.8 48.0,12.3 48.5,12.4 49.0,11.7 49.5,11.4 50.0,10.1 50.5,9.8 51.0,9.4 51.5,7.7 52.0,6.4 52.5,6.6 53.0,6.4 53.5,6.1 54.0,7.1 54.5,6.8 55.0,7.9 55.5,10.0 56.0,10.1 56.5,12.0 57.0,12.8 57.5,13.6 58.0,13.8 58.5,13.7 59.0,14.4 59.0,17.9 58.5,18.6 58.0,18.4 57.5,18.6 57.0,19.4 56.5,20.1 56.0,22.0 55.5,22.1 55.0,24.1 54.5,25.1 54.0,24.9 53.5,25.8 53.0,25.5 52.5,25.3 52.0,25.5 51.5,24.3 51.0,22.7 50.5,22.3 50.0,22.0 49.5,20.7 49.0,20.5 48.5,19.8 48.0,19.9 47.5,19.4 47.0,19.2 46.5,19.4 46.0,19.3 45.5,18.9 45.0,18.1 44.5,18.0 44.0,17.8 43.5,18.0 43.0,18.1 42.5,18.7 42.0,19.4 41.5,19.9 41.0,20.0 40.5,18.9 40.0,19.1 39.5,19.1 39.0,18.3 38.5,18.4 38.0,17.7 37.5,18.5 37.0,20.5 36.5,21.8 36.0,23.0 35.5,22.1 35.0,20.3 34.5,19.4 34.0,18.6 33.5,19.7 33.0,20.7 32.5,23.0 32.0,23.2 31.5,24.5 31.0,25.7 30.5,26.9 30.0,24.1 29.5,22.5 29.0,20.1 28.5,18.8 28.0,18.3 27.5,18.2 27.0,18.0 26.5,18.0 26.0,17.4 25.5,17.7 25.0,17.5 24.5,17.6 24.0,18.4 23.5,19.1 23.0,19.2 22.5,20.2 22.0,21.5 21.5,21.0 21.0,21.1 20.5,21.1 20.0,22.6 19.5,24.0 19.0,21.6 18.5,21.0 18.0,20.2 17.5,20.7 17.0,20.9 16.5,21.7 16.0,22.9 15.5,24.0 15.0,24.1 14.5,25.2 14.0,23.7 13.5,23.2 13.0,21.6 12.5,19.4 12.0,19.1 11.5,19.1 11.0,18.7 10.5,18.8 10.0,19.3 9.5,19.7 9.0,19.6 8.5,19.7 8.0,19.8 7.5,18.8 7.0,18.9 6.5,18.3 6.0,17.6 5.5,17.7 5.0,17.3 4.5,17.4 4.0,17.2 3.5,17.3 3.0,17.5 2.5,17.6 2.0,17.8 1.5,17.4 1.0,17.6 0.5,17.9 0.0,17.6" fill="#8a88a2" opacity="0.85"/><text x="3" y="29.3" font-family="Liberation Sans" font-size="5.6" font-weight="700" fill="#ffffff" opacity="1" style="paint-order:stroke" stroke="#000" stroke-opacity="0.25" stroke-width="0.6">2:17</text><rect x="44" y="23.6" width="13.3" height="7.7" rx="1.6" fill="#33bb92"/><path d="M48.2 27.6 L50.1 29.3 L53.4 25.7" fill="none" stroke="#1b3a30" stroke-width="0.8"/></g></svg>
<div class="t" style="left:55.3px;top:163.9px;font-size:5.2px;color:#a7a7b3">Upbeat Funky Good Tim...</div>
<svg style="left:119.4px;top:127.1px" width="59" height="33" viewBox="0 0 59 33"><defs><clipPath id="tc3"><rect width="59" height="33" rx="2"/></clipPath></defs><g clip-path="url(#tc3)"><rect width="59" height="33" fill="#fdfdfd"/><rect width="29.5" height="33" fill="#f2c867"/><use href="#cup" x="3.5" y="3" width="21.5" height="28"/><use href="#logo" x="33.16" y="6.79" width="22.68" height="20.41"/><text x="3" y="29.3" font-family="Liberation Sans" font-size="5.6" font-weight="700" fill="#ffffff" opacity="0.45" style="paint-order:stroke" stroke="#000" stroke-opacity="0.25" stroke-width="0.6">0:02</text><rect x="44" y="23.6" width="13.3" height="7.7" rx="1.6" fill="#33bb92"/><path d="M48.2 27.6 L50.1 29.3 L53.4 25.7" fill="none" stroke="#1b3a30" stroke-width="0.8"/></g></svg>
<div class="t" style="left:119.4px;top:163.9px;font-size:5.2px;color:#a7a7b3">Cup Mockup</div>
<svg style="left:55.3px;top:173.9px" width="59" height="33" viewBox="0 0 59 33"><defs><clipPath id="tc4"><rect width="59" height="33" rx="2"/></clipPath></defs><g clip-path="url(#tc4)"><rect width="59" height="33" fill="#fdfdfd"/><rect x="24.5" y="0" width="34.5" height="33" fill="#20365a"/><polygon points="37.1,5.3 37.9,7.2 40.0,7.4 38.4,8.8 38.9,10.8 37.1,9.7 35.3,10.8 35.8,8.8 34.2,7.4 36.3,7.2" fill="#f6f0e0"/><ellipse cx="57.4" cy="13.1" rx="3.0" ry="3.2" transform="rotate(41 57.4 13.1)" fill="#f6f0e0"/><polygon points="39.4,14.3 40.1,16.0 41.9,16.2 40.5,17.4 41.0,19.2 39.4,18.2 37.8,19.2 38.2,17.4 36.8,16.2 38.7,16.0" fill="#f6f0e0"/><polygon points="27.7,9.0 28.5,11.0 30.6,11.1 29.0,12.5 29.5,14.5 27.7,13.4 25.9,14.5 26.4,12.5 24.8,11.1 26.9,11.0" fill="#72b9cc"/><ellipse cx="25.1" cy="10.9" rx="2.2" ry="2.1" transform="rotate(58 25.1 10.9)" fill="#f6f0e0"/><circle cx="27.4" cy="9.0" r="1.9" fill="none" stroke="#efc75e" stroke-width="0.5"/><ellipse cx="52.8" cy="28.0" rx="2.9" ry="2.6" transform="rotate(137 52.8 28.0)" fill="#eeb293"/><polygon points="44.2,20.6 44.8,22.2 46.5,22.3 45.2,23.5 45.6,25.1 44.2,24.2 42.7,25.1 43.1,23.5 41.8,22.3 43.5,22.2" fill="#efc75e"/><polygon points="30.8,27.1 31.5,28.7 33.1,28.8 31.9,29.9 32.2,31.5 30.8,30.6 29.4,31.5 29.8,29.9 28.5,28.8 30.2,28.7" fill="#f6f0e0"/><circle cx="52.2" cy="2.8" r="1.7" fill="none" stroke="#efc75e" stroke-width="0.5"/><ellipse cx="40.2" cy="11.2" rx="2.9" ry="2.4" transform="rotate(33 40.2 11.2)" fill="#efc75e"/><polygon points="42.7,5.2 43.4,6.9 45.2,7.1 43.8,8.2 44.2,10.0 42.7,9.1 41.1,10.0 41.6,8.2 40.2,7.1 42.0,6.9" fill="#efc75e"/><ellipse cx="30.7" cy="30.8" rx="2.2" ry="2.3" transform="rotate(114 30.7 30.8)" fill="#efc75e"/><circle cx="47.7" cy="8.9" r="3.0" fill="none" stroke="#efc75e" stroke-width="0.5"/><ellipse cx="25.0" cy="24.2" rx="1.7" ry="2.7" transform="rotate(114 25.0 24.2)" fill="#efc75e"/><ellipse cx="47.2" cy="21.5" rx="2.3" ry="3.2" transform="rotate(129 47.2 21.5)" fill="#efc75e"/><polygon points="48.2,28.9 49.2,31.1 51.6,31.3 49.8,32.9 50.3,35.3 48.2,34.0 46.1,35.3 46.7,32.9 44.8,31.3 47.3,31.1" fill="#72b9cc"/><circle cx="49.6" cy="4.6" r="3.0" fill="none" stroke="#f6f0e0" stroke-width="0.5"/><circle cx="25.0" cy="20.6" r="2.2" fill="none" stroke="#eeb293" stroke-width="0.5"/><circle cx="27.4" cy="27.8" r="2.5" fill="none" stroke="#efc75e" stroke-width="0.5"/><polygon points="45.2,20.2 45.9,21.9 47.7,22.0 46.3,23.2 46.7,25.0 45.2,24.1 43.6,25.0 44.0,23.2 42.6,22.0 44.5,21.9" fill="#72b9cc"/><circle cx="39.9" cy="8.7" r="3.0" fill="none" stroke="#72b9cc" stroke-width="0.5"/><circle cx="35.7" cy="1.1" r="1.9" fill="none" stroke="#efc75e" stroke-width="0.5"/><ellipse cx="24.5" cy="12.6" rx="2.2" ry="2.3" transform="rotate(129 24.5 12.6)" fill="#eeb293"/><polygon points="27.6,23.7 28.5,25.8 30.7,26.0 29.0,27.4 29.5,29.6 27.6,28.4 25.7,29.6 26.3,27.4 24.6,26.0 26.8,25.8" fill="#efc75e"/><polygon points="25.3,6.8 26.1,8.9 28.3,9.0 26.7,10.5 27.2,12.6 25.3,11.5 23.4,12.6 23.9,10.5 22.2,9.0 24.4,8.9" fill="#e2574a"/><circle cx="53.9" cy="5.1" r="2.7" fill="none" stroke="#efc75e" stroke-width="0.5"/><circle cx="37.9" cy="10.8" r="1.8" fill="none" stroke="#efc75e" stroke-width="0.5"/><circle cx="45.8" cy="4.8" r="2.6" fill="none" stroke="#f6f0e0" stroke-width="0.5"/><circle cx="46.1" cy="24.2" r="1.8" fill="none" stroke="#efc75e" stroke-width="0.5"/><circle cx="50.5" cy="18.8" r="1.6" fill="none" stroke="#efc75e" stroke-width="0.5"/><ellipse cx="44.7" cy="29.5" rx="2.5" ry="2.3" transform="rotate(7 44.7 29.5)" fill="#f6f0e0"/><polygon points="29.1,8.3 30.0,10.6 32.5,10.8 30.6,12.4 31.2,14.8 29.1,13.5 27.0,14.8 27.6,12.4 25.7,10.8 28.1,10.6" fill="#efc75e"/><ellipse cx="26.3" cy="0.6" rx="1.8" ry="2.4" transform="rotate(116 26.3 0.6)" fill="#efc75e"/><ellipse cx="50.3" cy="16.6" rx="2.5" ry="2.1" transform="rotate(121 50.3 16.6)" fill="#efc75e"/><polygon points="52.4,24.5 53.3,26.7 55.7,26.9 53.9,28.4 54.5,30.7 52.4,29.5 50.4,30.7 50.9,28.4 49.1,26.9 51.5,26.7" fill="#72b9cc"/><ellipse cx="50.0" cy="32.2" rx="2.0" ry="2.7" transform="rotate(175 50.0 32.2)" fill="#eeb293"/><ellipse cx="51.0" cy="20.4" rx="1.5" ry="2.2" transform="rotate(65 51.0 20.4)" fill="#72b9cc"/><ellipse cx="50.1" cy="10.0" rx="1.4" ry="2.1" transform="rotate(68 50.1 10.0)" fill="#f6f0e0"/><ellipse cx="27.9" cy="7.2" rx="2.5" ry="2.4" transform="rotate(119 27.9 7.2)" fill="#f6f0e0"/><ellipse cx="51.0" cy="32.8" rx="1.9" ry="2.1" transform="rotate(121 51.0 32.8)" fill="#e2574a"/><ellipse cx="34.5" cy="2.5" rx="3.0" ry="3.4" transform="rotate(99 34.5 2.5)" fill="#efc75e"/><polygon points="56.1,28.2 56.8,29.8 58.5,29.9 57.2,31.1 57.6,32.8 56.1,31.8 54.6,32.8 55.0,31.1 53.7,29.9 55.5,29.8" fill="#eeb293"/><polygon points="42.6,27.9 43.5,30.1 46.0,30.3 44.1,31.9 44.7,34.3 42.6,33.0 40.5,34.3 41.1,31.9 39.2,30.3 41.6,30.1" fill="#f6f0e0"/><rect x="5.5" y="7" width="14" height="22" fill="#20365a"/><rect x="5.5" y="7" width="14" height="22" fill="#20365a"/><ellipse cx="9.4" cy="9.5" rx="2.2" ry="3.2" transform="rotate(100 9.4 9.5)" fill="#efc75e"/><ellipse cx="7.7" cy="27.9" rx="2.0" ry="3.0" transform="rotate(106 7.7 27.9)" fill="#efc75e"/><polygon points="10.8,6.8 11.5,8.6 13.5,8.8 12.0,10.1 12.4,12.0 10.8,10.9 9.1,12.0 9.5,10.1 8.1,8.8 10.0,8.6" fill="#72b9cc"/><circle cx="17.2" cy="9.6" r="2.6" fill="none" stroke="#72b9cc" stroke-width="0.5"/><ellipse cx="9.6" cy="15.2" rx="3.0" ry="2.8" transform="rotate(92 9.6 15.2)" fill="#f6f0e0"/><polygon points="16.1,23.3 16.7,24.9 18.4,25.0 17.1,26.1 17.5,27.8 16.1,26.9 14.6,27.8 15.0,26.1 13.7,25.0 15.4,24.9" fill="#e2574a"/><polygon points="9.5,24.8 10.2,26.6 12.1,26.7 10.7,28.0 11.1,29.8 9.5,28.8 7.9,29.8 8.3,28.0 6.9,26.7 8.8,26.6" fill="#f6f0e0"/><circle cx="9.9" cy="24.0" r="2.2" fill="none" stroke="#efc75e" stroke-width="0.5"/><circle cx="16.9" cy="20.9" r="2.9" fill="none" stroke="#efc75e" stroke-width="0.5"/><circle cx="8.3" cy="8.8" r="2.2" fill="none" stroke="#efc75e" stroke-width="0.5"/><polygon points="16.0,18.7 16.7,20.3 18.4,20.4 17.1,21.5 17.5,23.2 16.0,22.3 14.6,23.2 15.0,21.5 13.7,20.4 15.4,20.3" fill="#efc75e"/><polygon points="7.3,14.6 8.0,16.4 10.0,16.5 8.5,17.8 8.9,19.7 7.3,18.7 5.6,19.7 6.1,17.8 4.6,16.5 6.5,16.4" fill="#efc75e"/><ellipse cx="15.8" cy="21.4" rx="1.8" ry="2.7" transform="rotate(171 15.8 21.4)" fill="#f6f0e0"/><rect x="8" y="12" width="9" height="8" fill="#eeeeee"/><rect x="5" y="2.5" width="9" height="1.2" fill="#8da0b8"/><text x="3" y="29.3" font-family="Liberation Sans" font-size="5.6" font-weight="700" fill="#ffffff" opacity="0.45" style="paint-order:stroke" stroke="#000" stroke-opacity="0.25" stroke-width="0.6">0:02</text><rect x="44" y="23.6" width="13.3" height="7.7" rx="1.6" fill="#33bb92"/><path d="M48.2 27.6 L50.1 29.3 L53.4 25.7" fill="none" stroke="#1b3a30" stroke-width="0.8"/></g></svg>
<div class="t" style="left:55.3px;top:210.6px;font-size:5.2px;color:#a7a7b3">Spicy Punch</div>
<svg style="left:119.4px;top:173.9px" width="59" height="33" viewBox="0 0 59 33"><defs><clipPath id="tc5"><rect width="59" height="33" rx="2"/></clipPath></defs><g clip-path="url(#tc5)"><rect width="59" height="33" fill="#f3f3f2"/><path d="M4 4 L12 16 M22 5 L17 15" stroke="#d8c8a0" stroke-width="0.5"/><path d="M8 19 L18 19 L17 33 L9 33Z" fill="#d49a38"/><rect x="8" y="16" width="10" height="5" rx="2" fill="#e8dcc0"/><ellipse cx="19" cy="18.5" rx="2.6" ry="3.5" fill="#f0c850"/><rect x="24.5" width="34.5" height="33" fill="#5e9de0"/><ellipse cx="50" cy="9" rx="4" ry="5.5" fill="#c09080"/><ellipse cx="50" cy="4.5" rx="4" ry="2.5" fill="#3a2a22"/><ellipse cx="41" cy="11" rx="4" ry="4" fill="#9a6a4a"/><ellipse cx="41" cy="7" rx="5" ry="2.5" fill="#8a5a3a"/><ellipse cx="31" cy="22" rx="7" ry="10" fill="#3a2820"/><ellipse cx="33" cy="24" rx="3.5" ry="5" fill="#a06a48"/><ellipse cx="45" cy="22" rx="6.5" ry="8" fill="#c25a30"/><ellipse cx="45.5" cy="23" rx="4" ry="5.5" fill="#e2a482"/><ellipse cx="55" cy="24" rx="5" ry="9" fill="#3a2a24"/><ellipse cx="54.5" cy="24" rx="3.5" ry="6" fill="#d9a080"/><rect x="24.5" y="28" width="11" height="5" fill="#d0a020"/><rect x="36" y="29" width="10" height="4" fill="#c99070"/><text x="3" y="29.3" font-family="Liberation Sans" font-size="5.6" font-weight="700" fill="#ffffff" opacity="0.3" style="paint-order:stroke" stroke="#000" stroke-opacity="0.25" stroke-width="0.6">0:02</text><rect x="44" y="23.6" width="13.3" height="7.7" rx="1.6" fill="#33bb92"/><path d="M48.2 27.6 L50.1 29.3 L53.4 25.7" fill="none" stroke="#1b3a30" stroke-width="0.8"/></g></svg>
<div class="t" style="left:119.4px;top:210.6px;font-size:5.2px;color:#a7a7b3">Good Times</div>
<svg style="left:55.3px;top:221.2px" width="59" height="33" viewBox="0 0 59 33"><defs><clipPath id="tc6"><rect width="59" height="33" rx="2"/></clipPath></defs><g clip-path="url(#tc6)"><rect width="59" height="33" fill="#efe9e6"/><rect x="40" y="0" width="19" height="22" fill="#231c1c"/><ellipse cx="9" cy="22" rx="11" ry="13" fill="#c99a62"/><ellipse cx="8" cy="21" rx="7.5" ry="9" fill="#e2b292"/><path d="M2 18.5 h5 v3 h-5z M9 18.5 h5 v3 h-5z" fill="none" stroke="#2a2a2a" stroke-width="0.8"/><rect x="17" y="12" width="7" height="21" fill="#e6cfcf"/><ellipse cx="21" cy="7" rx="5" ry="6" fill="#d8a888"/><ellipse cx="20" cy="2" rx="5" ry="3" fill="#5a4030"/><ellipse cx="32" cy="6" rx="5" ry="5.5" fill="#d9a888"/><rect x="26" y="14" width="4" height="10" fill="#2a4a90"/><ellipse cx="37" cy="21" rx="8" ry="10" fill="#e6b898"/><ellipse cx="37" cy="12" rx="8" ry="3.5" fill="#6a4a30"/><ellipse cx="51" cy="10" rx="5" ry="7" fill="#6a4434"/><rect x="44" y="16" width="12" height="12" rx="3" fill="#b03a70"/><rect x="0" y="28" width="20" height="5" fill="#c03030"/><rect x="22" y="28" width="24" height="5" fill="#e8e4e0"/><text x="3" y="29.3" font-family="Liberation Sans" font-size="5.6" font-weight="700" fill="#ffffff" opacity="1" style="paint-order:stroke" stroke="#000" stroke-opacity="0.25" stroke-width="0.6">0:02</text><rect x="44" y="23.6" width="13.3" height="7.7" rx="1.6" fill="#33bb92"/><path d="M48.2 27.6 L50.1 29.3 L53.4 25.7" fill="none" stroke="#1b3a30" stroke-width="0.8"/></g></svg>
<div class="t" style="left:55.3px;top:257.6px;font-size:5.2px;color:#a7a7b3">Personas</div>
<svg style="left:119.4px;top:221.2px" width="59" height="33" viewBox="0 0 59 33"><defs><clipPath id="tc7"><rect width="59" height="33" rx="2"/></clipPath></defs><g clip-path="url(#tc7)"><rect width="59" height="33" fill="#fbfbfb"/><use href="#logo" x="3.74" y="7.11" width="17.53" height="15.77"/><rect x="25" width="34" height="33" fill="#d9c6be"/><rect x="25" y="24" width="34" height="9" fill="#9a7a68"/><rect x="27" y="26" width="6" height="7" fill="#4a3a30"/><rect x="52" width="7" height="33" fill="#b89890"/><path d="M29 2 L59 9 M33 1 L59 4" stroke="#2a2220" stroke-width="1.2"/><rect x="36" y="4" width="0.6" height="8" fill="#888"/><rect x="50" y="6" width="0.6" height="8" fill="#888"/><rect x="29.5" y="11" width="23" height="16" fill="#1f3a5a" transform="rotate(3 41 19)"/><use href="#logo" x="34.30" y="12.97" width="13.40" height="12.06"/><text x="3" y="29.3" font-family="Liberation Sans" font-size="5.6" font-weight="700" fill="#ffffff" opacity="0.3" style="paint-order:stroke" stroke="#000" stroke-opacity="0.25" stroke-width="0.6">0:02</text></g></svg>
<div class="t" style="left:119.4px;top:257.6px;font-size:5.2px;color:#a7a7b3">Store Banner</div>
<svg style="left:55.3px;top:267.9px" width="59" height="33" viewBox="0 0 59 33"><defs><clipPath id="tc8"><rect width="59" height="33" rx="2"/></clipPath></defs><g clip-path="url(#tc8)"><rect width="59" height="33" fill="#f9d0b5"/><rect x="29" width="30" height="33" fill="#62b4d2"/><rect x="3" y="11" width="10" height="1.3" fill="#6a5a60" opacity="0.6"/><path d="M23 5 L36 5 L37 30 L22 30Z" fill="#20365a"/><rect x="25" y="10" width="9" height="5" fill="#eee"/><path d="M42 7 L54 7 L55 30 L41 30Z" fill="#f4f2ef"/><rect x="43" y="11" width="11" height="5" fill="#e25c50"/><circle cx="28.1" cy="18.2" r="0.8" fill="#efc75e"/><circle cx="43.9" cy="19.5" r="0.9" fill="#22385c"/><circle cx="34.8" cy="22.5" r="0.8" fill="#efc75e"/><circle cx="44.6" cy="27.9" r="0.9" fill="#22385c"/><circle cx="36.0" cy="21.8" r="0.8" fill="#efc75e"/><circle cx="43.7" cy="19.3" r="0.9" fill="#22385c"/><circle cx="24.2" cy="20.4" r="0.8" fill="#efc75e"/><circle cx="43.1" cy="19.9" r="0.9" fill="#22385c"/><circle cx="26.4" cy="23.4" r="0.8" fill="#efc75e"/><circle cx="52.6" cy="26.0" r="0.9" fill="#22385c"/><circle cx="28.4" cy="21.4" r="0.8" fill="#efc75e"/><circle cx="48.3" cy="21.5" r="0.9" fill="#22385c"/><circle cx="27.4" cy="16.8" r="0.8" fill="#efc75e"/><circle cx="45.3" cy="28.6" r="0.9" fill="#22385c"/><circle cx="24.6" cy="22.5" r="0.8" fill="#efc75e"/><circle cx="49.6" cy="27.4" r="0.9" fill="#22385c"/><circle cx="25.8" cy="19.5" r="0.8" fill="#efc75e"/><circle cx="45.0" cy="21.8" r="0.9" fill="#22385c"/><circle cx="28.8" cy="28.4" r="0.8" fill="#efc75e"/><circle cx="52.2" cy="27.5" r="0.9" fill="#22385c"/><text x="3" y="29.3" font-family="Liberation Sans" font-size="5.6" font-weight="700" fill="#ffffff" opacity="0.9" style="paint-order:stroke" stroke="#000" stroke-opacity="0.25" stroke-width="0.6">0:02</text></g></svg>
<div class="t" style="left:55.3px;top:304.1px;font-size:5.2px;color:#a7a7b3">Packaging</div>
<svg style="left:119.4px;top:267.9px" width="59" height="33" viewBox="0 0 59 33"><defs><clipPath id="tc9"><rect width="59" height="33" rx="2"/></clipPath></defs><g clip-path="url(#tc9)"><rect width="59" height="33" fill="#ee6c5f"/><ellipse cx="6.2" cy="4.0" rx="1.8" ry="1.1" transform="rotate(0 6.2 4.0)" fill="#f6b8a8" opacity="0.8"/><ellipse cx="5.1" cy="5.9" rx="1.8" ry="1.1" transform="rotate(60 5.1 5.9)" fill="#f6b8a8" opacity="0.8"/><ellipse cx="2.9" cy="5.9" rx="1.8" ry="1.1" transform="rotate(120 2.9 5.9)" fill="#f6b8a8" opacity="0.8"/><ellipse cx="1.8" cy="4.0" rx="1.8" ry="1.1" transform="rotate(180 1.8 4.0)" fill="#f6b8a8" opacity="0.8"/><ellipse cx="2.9" cy="2.1" rx="1.8" ry="1.1" transform="rotate(240 2.9 2.1)" fill="#f6b8a8" opacity="0.8"/><ellipse cx="5.1" cy="2.1" rx="1.8" ry="1.1" transform="rotate(300 5.1 2.1)" fill="#f6b8a8" opacity="0.8"/><ellipse cx="17.6" cy="2.0" rx="1.4" ry="0.8" transform="rotate(0 17.6 2.0)" fill="#f6b8a8" opacity="0.8"/><ellipse cx="16.8" cy="3.4" rx="1.4" ry="0.8" transform="rotate(60 16.8 3.4)" fill="#f6b8a8" opacity="0.8"/><ellipse cx="15.2" cy="3.4" rx="1.4" ry="0.8" transform="rotate(120 15.2 3.4)" fill="#f6b8a8" opacity="0.8"/><ellipse cx="14.3" cy="2.0" rx="1.4" ry="0.8" transform="rotate(180 14.3 2.0)" fill="#f6b8a8" opacity="0.8"/><ellipse cx="15.2" cy="0.6" rx="1.4" ry="0.8" transform="rotate(240 15.2 0.6)" fill="#f6b8a8" opacity="0.8"/><ellipse cx="16.8" cy="0.6" rx="1.4" ry="0.8" transform="rotate(300 16.8 0.6)" fill="#f6b8a8" opacity="0.8"/><ellipse cx="31.6" cy="2.0" rx="1.4" ry="0.8" transform="rotate(0 31.6 2.0)" fill="#f6b8a8" opacity="0.8"/><ellipse cx="30.8" cy="3.4" rx="1.4" ry="0.8" transform="rotate(60 30.8 3.4)" fill="#f6b8a8" opacity="0.8"/><ellipse cx="29.2" cy="3.4" rx="1.4" ry="0.8" transform="rotate(120 29.2 3.4)" fill="#f6b8a8" opacity="0.8"/><ellipse cx="28.4" cy="2.0" rx="1.4" ry="0.8" transform="rotate(180 28.4 2.0)" fill="#f6b8a8" opacity="0.8"/><ellipse cx="29.2" cy="0.6" rx="1.4" ry="0.8" transform="rotate(240 29.2 0.6)" fill="#f6b8a8" opacity="0.8"/><ellipse cx="30.8" cy="0.6" rx="1.4" ry="0.8" transform="rotate(300 30.8 0.6)" fill="#f6b8a8" opacity="0.8"/><ellipse cx="47.9" cy="3.0" rx="1.6" ry="1.0" transform="rotate(0 47.9 3.0)" fill="#f6b8a8" opacity="0.8"/><ellipse cx="47.0" cy="4.7" rx="1.6" ry="1.0" transform="rotate(60 47.0 4.7)" fill="#f6b8a8" opacity="0.8"/><ellipse cx="45.0" cy="4.7" rx="1.6" ry="1.0" transform="rotate(120 45.0 4.7)" fill="#f6b8a8" opacity="0.8"/><ellipse cx="44.1" cy="3.0" rx="1.6" ry="1.0" transform="rotate(180 44.1 3.0)" fill="#f6b8a8" opacity="0.8"/><ellipse cx="45.0" cy="1.3" rx="1.6" ry="1.0" transform="rotate(240 45.0 1.3)" fill="#f6b8a8" opacity="0.8"/><ellipse cx="47.0" cy="1.3" rx="1.6" ry="1.0" transform="rotate(300 47.0 1.3)" fill="#f6b8a8" opacity="0.8"/><ellipse cx="57.2" cy="8.0" rx="1.8" ry="1.1" transform="rotate(0 57.2 8.0)" fill="#f6b8a8" opacity="0.8"/><ellipse cx="56.1" cy="9.9" rx="1.8" ry="1.1" transform="rotate(60 56.1 9.9)" fill="#f6b8a8" opacity="0.8"/><ellipse cx="53.9" cy="9.9" rx="1.8" ry="1.1" transform="rotate(120 53.9 9.9)" fill="#f6b8a8" opacity="0.8"/><ellipse cx="52.8" cy="8.0" rx="1.8" ry="1.1" transform="rotate(180 52.8 8.0)" fill="#f6b8a8" opacity="0.8"/><ellipse cx="53.9" cy="6.1" rx="1.8" ry="1.1" transform="rotate(240 53.9 6.1)" fill="#f6b8a8" opacity="0.8"/><ellipse cx="56.1" cy="6.1" rx="1.8" ry="1.1" transform="rotate(300 56.1 6.1)" fill="#f6b8a8" opacity="0.8"/><ellipse cx="4.9" cy="16.0" rx="1.6" ry="1.0" transform="rotate(0 4.9 16.0)" fill="#f6b8a8" opacity="0.8"/><ellipse cx="4.0" cy="17.7" rx="1.6" ry="1.0" transform="rotate(60 4.0 17.7)" fill="#f6b8a8" opacity="0.8"/><ellipse cx="2.0" cy="17.7" rx="1.6" ry="1.0" transform="rotate(120 2.0 17.7)" fill="#f6b8a8" opacity="0.8"/><ellipse cx="1.1" cy="16.0" rx="1.6" ry="1.0" transform="rotate(180 1.1 16.0)" fill="#f6b8a8" opacity="0.8"/><ellipse cx="2.0" cy="14.3" rx="1.6" ry="1.0" transform="rotate(240 2.0 14.3)" fill="#f6b8a8" opacity="0.8"/><ellipse cx="4.0" cy="14.3" rx="1.6" ry="1.0" transform="rotate(300 4.0 14.3)" fill="#f6b8a8" opacity="0.8"/><ellipse cx="58.2" cy="20.0" rx="1.8" ry="1.1" transform="rotate(0 58.2 20.0)" fill="#f6b8a8" opacity="0.8"/><ellipse cx="57.1" cy="21.9" rx="1.8" ry="1.1" transform="rotate(60 57.1 21.9)" fill="#f6b8a8" opacity="0.8"/><ellipse cx="54.9" cy="21.9" rx="1.8" ry="1.1" transform="rotate(120 54.9 21.9)" fill="#f6b8a8" opacity="0.8"/><ellipse cx="53.8" cy="20.0" rx="1.8" ry="1.1" transform="rotate(180 53.8 20.0)" fill="#f6b8a8" opacity="0.8"/><ellipse cx="54.9" cy="18.1" rx="1.8" ry="1.1" transform="rotate(240 54.9 18.1)" fill="#f6b8a8" opacity="0.8"/><ellipse cx="57.1" cy="18.1" rx="1.8" ry="1.1" transform="rotate(300 57.1 18.1)" fill="#f6b8a8" opacity="0.8"/><ellipse cx="7.2" cy="29.0" rx="1.8" ry="1.1" transform="rotate(0 7.2 29.0)" fill="#f6b8a8" opacity="0.8"/><ellipse cx="6.1" cy="30.9" rx="1.8" ry="1.1" transform="rotate(60 6.1 30.9)" fill="#f6b8a8" opacity="0.8"/><ellipse cx="3.9" cy="30.9" rx="1.8" ry="1.1" transform="rotate(120 3.9 30.9)" fill="#f6b8a8" opacity="0.8"/><ellipse cx="2.8" cy="29.0" rx="1.8" ry="1.1" transform="rotate(180 2.8 29.0)" fill="#f6b8a8" opacity="0.8"/><ellipse cx="3.9" cy="27.1" rx="1.8" ry="1.1" transform="rotate(240 3.9 27.1)" fill="#f6b8a8" opacity="0.8"/><ellipse cx="6.1" cy="27.1" rx="1.8" ry="1.1" transform="rotate(300 6.1 27.1)" fill="#f6b8a8" opacity="0.8"/><ellipse cx="19.6" cy="31.0" rx="1.4" ry="0.8" transform="rotate(0 19.6 31.0)" fill="#f6b8a8" opacity="0.8"/><ellipse cx="18.8" cy="32.4" rx="1.4" ry="0.8" transform="rotate(60 18.8 32.4)" fill="#f6b8a8" opacity="0.8"/><ellipse cx="17.2" cy="32.4" rx="1.4" ry="0.8" transform="rotate(120 17.2 32.4)" fill="#f6b8a8" opacity="0.8"/><ellipse cx="16.4" cy="31.0" rx="1.4" ry="0.8" transform="rotate(180 16.4 31.0)" fill="#f6b8a8" opacity="0.8"/><ellipse cx="17.2" cy="29.6" rx="1.4" ry="0.8" transform="rotate(240 17.2 29.6)" fill="#f6b8a8" opacity="0.8"/><ellipse cx="18.8" cy="29.6" rx="1.4" ry="0.8" transform="rotate(300 18.8 29.6)" fill="#f6b8a8" opacity="0.8"/><ellipse cx="41.6" cy="31.0" rx="1.4" ry="0.8" transform="rotate(0 41.6 31.0)" fill="#f6b8a8" opacity="0.8"/><ellipse cx="40.8" cy="32.4" rx="1.4" ry="0.8" transform="rotate(60 40.8 32.4)" fill="#f6b8a8" opacity="0.8"/><ellipse cx="39.2" cy="32.4" rx="1.4" ry="0.8" transform="rotate(120 39.2 32.4)" fill="#f6b8a8" opacity="0.8"/><ellipse cx="38.4" cy="31.0" rx="1.4" ry="0.8" transform="rotate(180 38.4 31.0)" fill="#f6b8a8" opacity="0.8"/><ellipse cx="39.2" cy="29.6" rx="1.4" ry="0.8" transform="rotate(240 39.2 29.6)" fill="#f6b8a8" opacity="0.8"/><ellipse cx="40.8" cy="29.6" rx="1.4" ry="0.8" transform="rotate(300 40.8 29.6)" fill="#f6b8a8" opacity="0.8"/><ellipse cx="53.9" cy="31.0" rx="1.6" ry="1.0" transform="rotate(0 53.9 31.0)" fill="#f6b8a8" opacity="0.8"/><ellipse cx="53.0" cy="32.7" rx="1.6" ry="1.0" transform="rotate(60 53.0 32.7)" fill="#f6b8a8" opacity="0.8"/><ellipse cx="51.0" cy="32.7" rx="1.6" ry="1.0" transform="rotate(120 51.0 32.7)" fill="#f6b8a8" opacity="0.8"/><ellipse cx="50.1" cy="31.0" rx="1.6" ry="1.0" transform="rotate(180 50.1 31.0)" fill="#f6b8a8" opacity="0.8"/><ellipse cx="51.0" cy="29.3" rx="1.6" ry="1.0" transform="rotate(240 51.0 29.3)" fill="#f6b8a8" opacity="0.8"/><ellipse cx="53.0" cy="29.3" rx="1.6" ry="1.0" transform="rotate(300 53.0 29.3)" fill="#f6b8a8" opacity="0.8"/><use href="#logo" x="18.16" y="5.79" width="22.68" height="20.41"/><text x="3" y="29.3" font-family="Liberation Sans" font-size="5.6" font-weight="700" fill="#ffffff" opacity="0.9" style="paint-order:stroke" stroke="#000" stroke-opacity="0.25" stroke-width="0.6">0:02</text></g></svg>
<div class="t" style="left:119.4px;top:304.1px;font-size:5.2px;color:#a7a7b3">Background</div>
<svg style="left:55.3px;top:315.8px" width="59" height="33" viewBox="0 0 59 33"><defs><clipPath id="tc10"><rect width="59" height="33" rx="2"/></clipPath></defs><g clip-path="url(#tc10)"><rect x="0" y="0" width="59" height="33" fill="#20365a"/><circle cx="7.5" cy="14.0" r="2.7" fill="none" stroke="#efc75e" stroke-width="0.5"/><circle cx="28.9" cy="2.4" r="2.9" fill="none" stroke="#efc75e" stroke-width="0.5"/><polygon points="50.5,29.5 51.1,31.2 52.9,31.3 51.6,32.4 52.0,34.1 50.5,33.2 49.0,34.1 49.4,32.4 48.0,31.3 49.8,31.2" fill="#efc75e"/><polygon points="9.0,28.5 9.9,30.8 12.4,31.0 10.5,32.6 11.1,34.9 9.0,33.7 6.9,34.9 7.5,32.6 5.6,31.0 8.0,30.8" fill="#eeb293"/><ellipse cx="38.2" cy="25.2" rx="2.3" ry="2.1" transform="rotate(32 38.2 25.2)" fill="#f6f0e0"/><circle cx="33.6" cy="1.2" r="2.9" fill="none" stroke="#eeb293" stroke-width="0.5"/><ellipse cx="14.9" cy="21.0" rx="1.6" ry="2.1" transform="rotate(134 14.9 21.0)" fill="#f6f0e0"/><circle cx="11.3" cy="8.6" r="1.6" fill="none" stroke="#efc75e" stroke-width="0.5"/><circle cx="17.8" cy="15.2" r="2.5" fill="none" stroke="#efc75e" stroke-width="0.5"/><polygon points="28.0,4.0 29.0,6.4 31.6,6.6 29.6,8.3 30.2,10.8 28.0,9.4 25.8,10.8 26.4,8.3 24.5,6.6 27.1,6.4" fill="#eeb293"/><polygon points="38.3,-1.8 39.3,0.5 41.8,0.7 39.9,2.3 40.5,4.8 38.3,3.5 36.2,4.8 36.8,2.3 34.9,0.7 37.4,0.5" fill="#f6f0e0"/><ellipse cx="24.8" cy="8.5" rx="2.9" ry="2.3" transform="rotate(8 24.8 8.5)" fill="#f6f0e0"/><ellipse cx="19.9" cy="13.9" rx="1.7" ry="3.1" transform="rotate(129 19.9 13.9)" fill="#f6f0e0"/><polygon points="12.1,28.5 13.0,30.7 15.5,30.9 13.6,32.5 14.2,34.9 12.1,33.6 10.0,34.9 10.6,32.5 8.7,30.9 11.2,30.7" fill="#efc75e"/><circle cx="27.4" cy="8.7" r="1.8" fill="none" stroke="#eeb293" stroke-width="0.5"/><polygon points="29.3,3.2 30.0,5.1 32.1,5.3 30.5,6.6 31.0,8.6 29.3,7.5 27.5,8.6 28.0,6.6 26.4,5.3 28.5,5.1" fill="#efc75e"/><circle cx="3.3" cy="19.6" r="1.7" fill="none" stroke="#f6f0e0" stroke-width="0.5"/><polygon points="57.5,2.2 58.1,3.8 59.8,3.9 58.5,5.0 58.9,6.7 57.5,5.8 56.0,6.7 56.4,5.0 55.1,3.9 56.8,3.8" fill="#efc75e"/><polygon points="26.5,20.9 27.2,22.6 29.0,22.7 27.6,23.9 28.0,25.6 26.5,24.6 25.0,25.6 25.4,23.9 24.1,22.7 25.9,22.6" fill="#e2574a"/><polygon points="55.0,7.2 55.9,9.5 58.5,9.7 56.6,11.4 57.1,13.9 55.0,12.5 52.8,13.9 53.4,11.4 51.4,9.7 54.0,9.5" fill="#efc75e"/><circle cx="27.6" cy="10.3" r="2.8" fill="none" stroke="#f6f0e0" stroke-width="0.5"/><polygon points="26.1,1.1 26.8,2.7 28.5,2.8 27.2,3.9 27.6,5.6 26.1,4.7 24.6,5.6 25.0,3.9 23.7,2.8 25.4,2.7" fill="#72b9cc"/><circle cx="56.4" cy="4.1" r="1.9" fill="none" stroke="#e2574a" stroke-width="0.5"/><circle cx="45.4" cy="10.2" r="1.7" fill="none" stroke="#72b9cc" stroke-width="0.5"/><circle cx="27.9" cy="12.3" r="1.9" fill="none" stroke="#f6f0e0" stroke-width="0.5"/><ellipse cx="43.5" cy="15.7" rx="1.8" ry="2.9" transform="rotate(103 43.5 15.7)" fill="#72b9cc"/><circle cx="22.2" cy="15.3" r="1.7" fill="none" stroke="#efc75e" stroke-width="0.5"/><polygon points="44.1,26.9 44.8,28.6 46.7,28.8 45.3,30.0 45.7,31.9 44.1,30.9 42.5,31.9 42.9,30.0 41.4,28.8 43.4,28.6" fill="#eeb293"/><ellipse cx="2.6" cy="24.6" rx="2.9" ry="2.4" transform="rotate(152 2.6 24.6)" fill="#efc75e"/><circle cx="55.8" cy="2.2" r="1.8" fill="none" stroke="#f6f0e0" stroke-width="0.5"/><ellipse cx="56.4" cy="31.5" rx="1.8" ry="2.6" transform="rotate(126 56.4 31.5)" fill="#f6f0e0"/><circle cx="54.8" cy="6.0" r="2.6" fill="none" stroke="#eeb293" stroke-width="0.5"/><polygon points="45.6,17.2 46.3,19.0 48.3,19.2 46.8,20.4 47.3,22.3 45.6,21.3 43.9,22.3 44.4,20.4 42.9,19.2 44.8,19.0" fill="#f6f0e0"/><ellipse cx="46.2" cy="19.7" rx="2.0" ry="2.2" transform="rotate(104 46.2 19.7)" fill="#72b9cc"/><ellipse cx="38.3" cy="15.9" rx="1.7" ry="2.6" transform="rotate(26 38.3 15.9)" fill="#efc75e"/><polygon points="15.6,-0.3 16.4,1.6 18.6,1.8 17.0,3.2 17.4,5.3 15.6,4.2 13.8,5.3 14.3,3.2 12.7,1.8 14.8,1.6" fill="#efc75e"/><polygon points="57.4,2.7 58.2,4.6 60.3,4.8 58.7,6.1 59.1,8.2 57.4,7.1 55.6,8.2 56.1,6.1 54.5,4.8 56.5,4.6" fill="#f6f0e0"/><circle cx="13.9" cy="17.8" r="2.7" fill="none" stroke="#f6f0e0" stroke-width="0.5"/><ellipse cx="17.3" cy="18.7" rx="2.6" ry="2.3" transform="rotate(63 17.3 18.7)" fill="#72b9cc"/><circle cx="14.5" cy="5.1" r="2.4" fill="none" stroke="#eeb293" stroke-width="0.5"/><polygon points="3.8,5.2 4.7,7.2 6.8,7.3 5.2,8.7 5.7,10.8 3.8,9.7 2.0,10.8 2.5,8.7 0.8,7.3 3.0,7.2" fill="#72b9cc"/><circle cx="47.7" cy="21.6" r="1.7" fill="none" stroke="#f6f0e0" stroke-width="0.5"/><ellipse cx="52.1" cy="7.6" rx="2.0" ry="3.2" transform="rotate(59 52.1 7.6)" fill="#e2574a"/><circle cx="3.0" cy="19.8" r="1.9" fill="none" stroke="#efc75e" stroke-width="0.5"/><ellipse cx="22.0" cy="28.6" rx="1.8" ry="3.1" transform="rotate(1 22.0 28.6)" fill="#efc75e"/><polygon points="37.6,21.0 38.3,22.5 39.9,22.7 38.7,23.8 39.1,25.4 37.6,24.5 36.2,25.4 36.6,23.8 35.3,22.7 37.0,22.5" fill="#efc75e"/><polygon points="8.3,3.5 9.2,5.6 11.4,5.7 9.7,7.2 10.2,9.4 8.3,8.2 6.4,9.4 7.0,7.2 5.3,5.7 7.5,5.6" fill="#72b9cc"/><circle cx="53.9" cy="26.9" r="2.2" fill="none" stroke="#f6f0e0" stroke-width="0.5"/><polygon points="10.9,6.8 11.9,9.0 14.3,9.2 12.4,10.8 13.0,13.1 10.9,11.9 8.9,13.1 9.4,10.8 7.6,9.2 10.0,9.0" fill="#72b9cc"/><circle cx="28.5" cy="13.5" r="2.5" fill="none" stroke="#efc75e" stroke-width="0.5"/><polygon points="37.7,-0.4 38.6,1.8 40.9,2.0 39.2,3.5 39.7,5.7 37.7,4.5 35.7,5.7 36.3,3.5 34.5,2.0 36.8,1.8" fill="#eeb293"/><ellipse cx="58.3" cy="22.0" rx="1.5" ry="3.0" transform="rotate(91 58.3 22.0)" fill="#e2574a"/><circle cx="24.6" cy="28.5" r="2.1" fill="none" stroke="#e2574a" stroke-width="0.5"/><circle cx="23.1" cy="13.4" r="2.2" fill="none" stroke="#eeb293" stroke-width="0.5"/><ellipse cx="25.0" cy="27.1" rx="2.8" ry="2.6" transform="rotate(41 25.0 27.1)" fill="#eeb293"/><ellipse cx="0.9" cy="18.2" rx="2.9" ry="2.1" transform="rotate(159 0.9 18.2)" fill="#eeb293"/><polygon points="43.5,3.0 44.2,4.7 46.0,4.9 44.6,6.0 45.0,7.8 43.5,6.8 42.0,7.8 42.4,6.0 41.0,4.9 42.8,4.7" fill="#72b9cc"/><ellipse cx="54.6" cy="3.6" rx="2.7" ry="3.4" transform="rotate(50 54.6 3.6)" fill="#eeb293"/><circle cx="7.5" cy="31.1" r="2.3" fill="none" stroke="#72b9cc" stroke-width="0.5"/><polygon points="35.9,17.6 36.7,19.8 39.1,20.0 37.3,21.5 37.8,23.7 35.9,22.5 33.9,23.7 34.4,21.5 32.6,20.0 35.0,19.8" fill="#efc75e"/><circle cx="48.6" cy="5.3" r="1.9" fill="none" stroke="#f6f0e0" stroke-width="0.5"/><ellipse cx="36.3" cy="6.5" rx="2.3" ry="2.1" transform="rotate(132 36.3 6.5)" fill="#e2574a"/><polygon points="22.6,0.6 23.5,2.8 25.9,3.0 24.1,4.5 24.6,6.8 22.6,5.6 20.6,6.8 21.2,4.5 19.4,3.0 21.7,2.8" fill="#eeb293"/><circle cx="2.4" cy="18.6" r="1.7" fill="none" stroke="#eeb293" stroke-width="0.5"/><ellipse cx="6.9" cy="19.8" rx="2.4" ry="2.4" transform="rotate(107 6.9 19.8)" fill="#72b9cc"/><ellipse cx="34.4" cy="14.0" rx="2.1" ry="2.6" transform="rotate(5 34.4 14.0)" fill="#72b9cc"/><polygon points="36.5,12.7 37.4,14.9 39.8,15.1 38.0,16.6 38.6,19.0 36.5,17.7 34.5,19.0 35.0,16.6 33.2,15.1 35.6,14.9" fill="#efc75e"/><ellipse cx="49.4" cy="26.7" rx="1.5" ry="2.5" transform="rotate(93 49.4 26.7)" fill="#e2574a"/><ellipse cx="47.3" cy="16.6" rx="1.5" ry="2.2" transform="rotate(80 47.3 16.6)" fill="#efc75e"/><ellipse cx="30.2" cy="1.8" rx="2.0" ry="3.3" transform="rotate(34 30.2 1.8)" fill="#f6f0e0"/><circle cx="50.6" cy="32.9" r="2.7" fill="none" stroke="#efc75e" stroke-width="0.5"/><polygon points="7.8,25.7 8.7,27.9 11.1,28.1 9.3,29.7 9.8,32.1 7.8,30.8 5.7,32.1 6.3,29.7 4.4,28.1 6.8,27.9" fill="#eeb293"/><polygon points="40.5,20.2 41.4,22.5 43.9,22.7 42.0,24.3 42.6,26.7 40.5,25.4 38.4,26.7 39.0,24.3 37.1,22.7 39.5,22.5" fill="#eeb293"/><circle cx="44.6" cy="5.2" r="2.0" fill="none" stroke="#efc75e" stroke-width="0.5"/><circle cx="8.5" cy="16.6" r="1.9" fill="none" stroke="#e2574a" stroke-width="0.5"/><ellipse cx="3" cy="6" rx="5" ry="6" fill="#e2574a"/><ellipse cx="53" cy="5" rx="5" ry="5" fill="#e2574a"/><ellipse cx="30" cy="31" rx="4" ry="3" fill="#e2574a"/><text x="3" y="29.3" font-family="Liberation Sans" font-size="5.6" font-weight="700" fill="#ffffff" opacity="0.9" style="paint-order:stroke" stroke="#000" stroke-opacity="0.25" stroke-width="0.6">0:02</text></g></svg>
<div class="t" style="left:55.3px;top:352.6px;font-size:5.2px;color:#a7a7b3">Pattern - Spicy Punch</div>
<svg style="left:119.4px;top:315.8px" width="59" height="33" viewBox="0 0 59 33"><defs><clipPath id="tc11"><rect width="59" height="33" rx="2"/></clipPath></defs><g clip-path="url(#tc11)"><rect width="59" height="33" fill="#b8a8b0"/><rect width="59" height="8" fill="#cfc0c6"/><rect x="2" y="1" width="4" height="6" fill="#d87a8a" opacity="0.6"/><rect x="8" y="1" width="5" height="5" fill="#e0c060" opacity="0.5"/><rect x="0" y="14" width="18" height="19" fill="#e8e8e8"/><rect x="0" y="19" width="6" height="14" fill="#b9806a"/><ellipse cx="20" cy="15" rx="7" ry="8" fill="#c28a6a"/><ellipse cx="21" cy="7.5" rx="7" ry="3.5" fill="#2a1e1a"/><ellipse cx="32" cy="14" rx="6" ry="9" fill="#2b201d"/><ellipse cx="32" cy="15" rx="4.5" ry="6" fill="#7a5040"/><ellipse cx="40" cy="19" rx="6" ry="12" fill="#2a201e"/><ellipse cx="40" cy="20" rx="4" ry="7" fill="#c9987a"/><ellipse cx="51" cy="14" rx="8" ry="10" fill="#2e2320"/><ellipse cx="51" cy="15" rx="5" ry="6" fill="#d0a080"/><ellipse cx="26" cy="27" rx="8" ry="9" fill="#1f1816"/><ellipse cx="26" cy="27" rx="5" ry="6" fill="#c88a6a"/><rect x="40" y="24" width="13" height="9" fill="#c0303a"/><rect x="53" y="22" width="6" height="11" fill="#3a5a8a"/><text x="3" y="29.3" font-family="Liberation Sans" font-size="5.6" font-weight="700" fill="#ffffff" opacity="0.5" style="paint-order:stroke" stroke="#000" stroke-opacity="0.25" stroke-width="0.6">0:02</text></g></svg>
<div class="t" style="left:119.4px;top:352.6px;font-size:5.2px;color:#a7a7b3">Social Post</div>
<svg style="left:55.3px;top:364.5px" width="59" height="33" viewBox="0 0 59 33"><defs><clipPath id="tc12"><rect width="59" height="33" rx="2"/></clipPath></defs><g clip-path="url(#tc12)"><rect x="0" y="0" width="59" height="33" fill="#f8f6f4"/><ellipse cx="36.3" cy="7.8" rx="1.9" ry="1.8" fill="#efc75e"/><circle cx="55.2" cy="22.4" r="1.4" fill="none" stroke="#20365a" stroke-width="0.6"/><circle cx="6.8" cy="17.5" r="1.7" fill="none" stroke="#efc75e" stroke-width="0.6"/><circle cx="32.8" cy="19.1" r="1.3" fill="none" stroke="#f4b89a" stroke-width="0.6"/><circle cx="37.2" cy="13.0" r="1.5" fill="none" stroke="#9fb6cf" stroke-width="0.6"/><circle cx="34.1" cy="11.9" r="1.8" fill="none" stroke="#efc75e" stroke-width="0.6"/><ellipse cx="36.3" cy="31.6" rx="2.4" ry="1.7" fill="#e2574a"/><circle cx="54.8" cy="29.6" r="2.2" fill="none" stroke="#9fb6cf" stroke-width="0.6"/><ellipse cx="8.8" cy="20.3" rx="2.4" ry="2.6" fill="#e2574a"/><ellipse cx="28.8" cy="20.2" rx="1.6" ry="2.1" fill="#e2574a"/><ellipse cx="6.3" cy="11.8" rx="2.6" ry="2.1" fill="#efc75e"/><ellipse cx="21.6" cy="27.3" rx="1.5" ry="2.5" fill="#e2574a"/><circle cx="8.8" cy="3.2" r="2.3" fill="none" stroke="#20365a" stroke-width="0.6"/><ellipse cx="23.7" cy="8.7" rx="2.7" ry="2.1" fill="#efc75e"/><circle cx="35.1" cy="19.1" r="1.9" fill="none" stroke="#efc75e" stroke-width="0.6"/><ellipse cx="14.7" cy="29.8" rx="2.5" ry="1.8" fill="#f4b89a"/><ellipse cx="9.4" cy="30.1" rx="2.6" ry="2.3" fill="#e2574a"/><circle cx="8.4" cy="6.6" r="1.9" fill="none" stroke="#e2574a" stroke-width="0.6"/><ellipse cx="24.5" cy="20.2" rx="1.6" ry="2.2" fill="#20365a"/><ellipse cx="46.2" cy="23.6" rx="3.0" ry="2.4" fill="#20365a"/><ellipse cx="4.7" cy="21.6" rx="3.3" ry="1.6" fill="#f4b89a"/><circle cx="2.3" cy="11.1" r="2.1" fill="none" stroke="#20365a" stroke-width="0.6"/><circle cx="42.0" cy="8.8" r="1.8" fill="none" stroke="#efc75e" stroke-width="0.6"/><circle cx="57.3" cy="9.8" r="2.4" fill="none" stroke="#9fb6cf" stroke-width="0.6"/><ellipse cx="51.9" cy="0.5" rx="1.9" ry="2.4" fill="#20365a"/><circle cx="44.0" cy="10.8" r="1.6" fill="none" stroke="#e2574a" stroke-width="0.6"/><circle cx="22.4" cy="28.1" r="2.5" fill="none" stroke="#e2574a" stroke-width="0.6"/><circle cx="27.7" cy="27.7" r="2.3" fill="none" stroke="#9fb6cf" stroke-width="0.6"/><circle cx="56.4" cy="7.7" r="2.2" fill="none" stroke="#f4b89a" stroke-width="0.6"/><circle cx="36.7" cy="2.6" r="1.4" fill="none" stroke="#f4b89a" stroke-width="0.6"/><ellipse cx="6.6" cy="20.5" rx="3.3" ry="2.3" fill="#20365a"/><circle cx="2.5" cy="22.9" r="2.1" fill="none" stroke="#20365a" stroke-width="0.6"/><circle cx="2.8" cy="28.3" r="1.5" fill="none" stroke="#20365a" stroke-width="0.6"/><circle cx="52.6" cy="2.2" r="2.4" fill="none" stroke="#9fb6cf" stroke-width="0.6"/><ellipse cx="6.3" cy="6.8" rx="1.6" ry="2.6" fill="#f4b89a"/><circle cx="5.2" cy="24.8" r="1.8" fill="none" stroke="#20365a" stroke-width="0.6"/><ellipse cx="5.8" cy="25.0" rx="2.1" ry="1.9" fill="#e2574a"/><ellipse cx="20.7" cy="30.7" rx="2.9" ry="2.7" fill="#20365a"/><circle cx="29.7" cy="28.1" r="1.2" fill="none" stroke="#9fb6cf" stroke-width="0.6"/><ellipse cx="1.8" cy="17.1" rx="2.3" ry="1.3" fill="#f4b89a"/><ellipse cx="12.8" cy="28.5" rx="3.0" ry="1.5" fill="#9fb6cf"/><circle cx="30.9" cy="9.5" r="1.3" fill="none" stroke="#20365a" stroke-width="0.6"/><circle cx="29.0" cy="16.2" r="1.4" fill="none" stroke="#efc75e" stroke-width="0.6"/><ellipse cx="35.0" cy="31.6" rx="2.5" ry="1.5" fill="#f4b89a"/><ellipse cx="55.4" cy="7.6" rx="3.2" ry="2.4" fill="#e2574a"/><circle cx="46.5" cy="23.0" r="2.0" fill="none" stroke="#f4b89a" stroke-width="0.6"/><circle cx="5.6" cy="30.6" r="2.2" fill="none" stroke="#efc75e" stroke-width="0.6"/><ellipse cx="52.4" cy="0.8" rx="2.0" ry="2.6" fill="#f4b89a"/><rect x="33" y="0" width="23" height="33" fill="#f9d0b5"/><rect x="36" y="7" width="17" height="24" fill="#f3f1ee"/><rect x="36" y="7" width="17" height="24" fill="#f3f1ee"/><circle cx="38.9" cy="30.6" r="2.4" fill="none" stroke="#9fb6cf" stroke-width="0.6"/><circle cx="45.0" cy="25.1" r="2.0" fill="none" stroke="#e2574a" stroke-width="0.6"/><circle cx="45.9" cy="19.5" r="1.8" fill="none" stroke="#efc75e" stroke-width="0.6"/><ellipse cx="48.6" cy="11.1" rx="2.9" ry="2.1" fill="#9fb6cf"/><circle cx="41.7" cy="22.4" r="1.9" fill="none" stroke="#e2574a" stroke-width="0.6"/><circle cx="41.1" cy="23.9" r="1.4" fill="none" stroke="#efc75e" stroke-width="0.6"/><circle cx="52.6" cy="24.4" r="1.7" fill="none" stroke="#e2574a" stroke-width="0.6"/><rect x="38" y="11" width="13" height="10" fill="#e2574a"/><rect x="40" y="2" width="10" height="1.2" fill="#8a8a9a"/></g></svg>
<div class="t" style="left:55.3px;top:400.9px;font-size:5.2px;color:#a7a7b3">Packaging-01</div>
<svg style="left:119.4px;top:364.5px" width="59" height="33" viewBox="0 0 59 33"><defs><clipPath id="tc13"><rect width="59" height="33" rx="2"/></clipPath></defs><g clip-path="url(#tc13)"><rect x="0" y="0" width="59" height="33" fill="#f8f6f4"/><circle cx="19.4" cy="6.2" r="2.1" fill="none" stroke="#e2574a" stroke-width="0.6"/><ellipse cx="9.7" cy="21.7" rx="1.8" ry="1.4" fill="#20365a"/><ellipse cx="43.3" cy="14.4" rx="2.6" ry="1.4" fill="#efc75e"/><ellipse cx="52.2" cy="15.3" rx="3.0" ry="1.9" fill="#e2574a"/><ellipse cx="29.5" cy="20.9" rx="1.8" ry="2.2" fill="#e2574a"/><circle cx="0.3" cy="8.0" r="2.1" fill="none" stroke="#f4b89a" stroke-width="0.6"/><ellipse cx="44.2" cy="13.9" rx="2.8" ry="2.6" fill="#9fb6cf"/><circle cx="41.3" cy="28.1" r="2.0" fill="none" stroke="#20365a" stroke-width="0.6"/><circle cx="25.5" cy="8.6" r="2.4" fill="none" stroke="#f4b89a" stroke-width="0.6"/><circle cx="46.2" cy="23.5" r="1.5" fill="none" stroke="#e2574a" stroke-width="0.6"/><circle cx="28.5" cy="0.6" r="1.9" fill="none" stroke="#f4b89a" stroke-width="0.6"/><circle cx="54.9" cy="6.0" r="2.2" fill="none" stroke="#20365a" stroke-width="0.6"/><ellipse cx="49.1" cy="30.0" rx="2.0" ry="1.5" fill="#f4b89a"/><ellipse cx="46.1" cy="31.0" rx="1.7" ry="2.1" fill="#20365a"/><ellipse cx="12.1" cy="15.7" rx="2.9" ry="1.8" fill="#9fb6cf"/><ellipse cx="24.2" cy="31.3" rx="2.7" ry="1.8" fill="#efc75e"/><circle cx="43.0" cy="20.3" r="1.5" fill="none" stroke="#20365a" stroke-width="0.6"/><ellipse cx="23.6" cy="0.4" rx="2.3" ry="2.3" fill="#f4b89a"/><ellipse cx="34.2" cy="3.6" rx="2.2" ry="2.7" fill="#efc75e"/><ellipse cx="58.7" cy="31.7" rx="1.8" ry="2.7" fill="#e2574a"/><ellipse cx="47.8" cy="20.9" rx="2.5" ry="1.6" fill="#20365a"/><circle cx="20.8" cy="21.1" r="2.3" fill="none" stroke="#e2574a" stroke-width="0.6"/><circle cx="58.8" cy="25.1" r="2.2" fill="none" stroke="#f4b89a" stroke-width="0.6"/><ellipse cx="20.9" cy="28.1" rx="2.2" ry="1.6" fill="#f4b89a"/><circle cx="40.1" cy="15.9" r="2.2" fill="none" stroke="#f4b89a" stroke-width="0.6"/><ellipse cx="14.5" cy="10.0" rx="2.3" ry="2.2" fill="#efc75e"/><ellipse cx="52.9" cy="5.0" rx="2.2" ry="1.3" fill="#20365a"/><ellipse cx="53.4" cy="25.9" rx="3.0" ry="2.2" fill="#9fb6cf"/><ellipse cx="38.8" cy="6.9" rx="2.0" ry="2.2" fill="#20365a"/><circle cx="8.4" cy="7.7" r="1.7" fill="none" stroke="#9fb6cf" stroke-width="0.6"/><ellipse cx="12.3" cy="13.3" rx="2.6" ry="2.3" fill="#e2574a"/><circle cx="39.4" cy="29.5" r="2.3" fill="none" stroke="#20365a" stroke-width="0.6"/><ellipse cx="29.2" cy="7.0" rx="3.0" ry="2.3" fill="#e2574a"/><ellipse cx="32.7" cy="8.7" rx="1.8" ry="2.0" fill="#20365a"/><circle cx="28.6" cy="29.9" r="1.5" fill="none" stroke="#20365a" stroke-width="0.6"/><ellipse cx="31.8" cy="28.5" rx="3.0" ry="1.9" fill="#e2574a"/><ellipse cx="29.4" cy="9.8" rx="2.3" ry="2.8" fill="#9fb6cf"/><circle cx="4.4" cy="21.0" r="1.2" fill="none" stroke="#20365a" stroke-width="0.6"/><circle cx="2.7" cy="24.3" r="2.3" fill="none" stroke="#9fb6cf" stroke-width="0.6"/><circle cx="30.1" cy="16.0" r="1.2" fill="none" stroke="#20365a" stroke-width="0.6"/><ellipse cx="24.5" cy="4.2" rx="2.7" ry="1.7" fill="#20365a"/><ellipse cx="32.7" cy="30.1" rx="2.1" ry="1.6" fill="#9fb6cf"/><circle cx="48.8" cy="9.7" r="1.7" fill="none" stroke="#20365a" stroke-width="0.6"/><ellipse cx="58.1" cy="28.8" rx="1.9" ry="2.0" fill="#9fb6cf"/><ellipse cx="19.5" cy="10.5" rx="2.6" ry="2.2" fill="#20365a"/><ellipse cx="23.5" cy="18.3" rx="2.5" ry="1.8" fill="#20365a"/><circle cx="0.4" cy="6.3" r="2.0" fill="none" stroke="#20365a" stroke-width="0.6"/><ellipse cx="3.5" cy="16.5" rx="2.2" ry="1.4" fill="#20365a"/><circle cx="41.1" cy="19.7" r="1.5" fill="none" stroke="#20365a" stroke-width="0.6"/><ellipse cx="37.4" cy="20.6" rx="2.7" ry="2.6" fill="#20365a"/><circle cx="45.7" cy="30.2" r="1.7" fill="none" stroke="#f4b89a" stroke-width="0.6"/><ellipse cx="46.4" cy="18.5" rx="2.0" ry="1.9" fill="#e2574a"/><circle cx="1.2" cy="18.7" r="2.4" fill="none" stroke="#efc75e" stroke-width="0.6"/><ellipse cx="6" cy="27" rx="5" ry="4" fill="#20365a"/><ellipse cx="20" cy="2" rx="4" ry="3" fill="#20365a"/><ellipse cx="27" cy="23" rx="4" ry="4" fill="#efc75e"/><ellipse cx="52" cy="19" rx="5" ry="4" fill="#20365a"/><ellipse cx="40" cy="8" rx="3.5" ry="3.5" fill="#f4b89a"/><ellipse cx="12" cy="8" rx="3" ry="3" fill="#e2574a"/><ellipse cx="46" cy="26" rx="3" ry="3" fill="#e2574a"/></g></svg>
<div class="t" style="left:119.4px;top:400.9px;font-size:5.2px;color:#a7a7b3">Pattern - Citrus Blast</div>
<svg style="left:50.5px;top:564.5px" width="8" height="7" viewBox="0 0 8 7"><path d="M2 5.5 Q0.3 5.5 0.4 3.9 Q0.5 2.6 1.8 2.6 Q2.3 0.6 4.2 0.7 Q6 0.8 6.2 2.7" fill="none" stroke="#d8d8e0" stroke-width="0.8"/><circle cx="5.4" cy="4.6" r="2.2" fill="#d8d8e0"/><path d="M4.4 4.6 L5.2 5.3 L6.4 4" fill="none" stroke="#272731" stroke-width="0.6"/></svg>
<div class="t" style="left:62.5px;top:565px;font-size:6.1px;color:#e2e2e8">Your media is backed up</div>
<svg style="left:171px;top:566.5px" width="6" height="4" viewBox="0 0 6 4"><path d="M0.6 0.6 L3 3 L5.4 0.6" fill="none" stroke="#d0d0d8" stroke-width="0.8"/></svg>
<div class="a" style="left:190px;top:326px;width:6px;height:20px;background:#272731;border-radius:0 3px 3px 0"></div>
<svg style="left:191px;top:332.5px" width="4" height="6" viewBox="0 0 4 6"><path d="M3.2 0.6 L1 3 L3.2 5.4" fill="none" stroke="#c4c4cc" stroke-width="0.9"/></svg>
<div class="a" style="left:212px;top:354px;width:1px;height:12px;background:#262631"></div>
<!-- preview -->
<div class="a" style="left:284px;top:62px;width:584px;height:329px;background:#13131d"></div>
<div class="a" style="left:285px;top:63px;width:294px;height:327px;background:#f2c867"></div>
<div class="a" style="left:579px;top:63px;width:288px;height:327px;background:#ffffff"></div>
<svg style="left:320px;top:115px" width="202" height="240" viewBox="320 115 202 240"><use href="#cup" x="320" y="115" width="202" height="240"/></svg>
<svg style="left:623px;top:129px" width="200" height="180" viewBox="-100 -90 200 180"><use href="#logo" x="-100" y="-90" width="200" height="180"/></svg>

<!-- top bar -->
<div class="t" style="left:199px;top:30.7px;font-size:7.45px;color:#a2a2ae">Personal</div>
<svg style="left:237px;top:31px" width="4" height="6" viewBox="0 0 4 6"><path d="M0.6 0.5 L3.2 3 L0.6 5.5" fill="none" stroke="#a8a8b4" stroke-width="0.7"/></svg>
<div class="a" style="left:244.3px;top:24.3px;width:38.5px;height:19.7px;border-radius:2px;background:#272731"></div>
<div class="t" style="left:251.6px;top:30.9px;font-size:7.2px;color:#ececf2">FruiTea</div>
<svg style="left:289px;top:30.5px" width="2" height="7" viewBox="0 0 2 7"><circle cx="1" cy="0.8" r="0.55" fill="#8a8a96"/><circle cx="1" cy="3.5" r="0.55" fill="#8a8a96"/><circle cx="1" cy="6.2" r="0.55" fill="#8a8a96"/></svg>
<svg style="left:302.5px;top:28.5px" width="11" height="10" viewBox="0 0 11 10"><path d="M4.5 8 H2.6 Q0.5 8 0.5 5.9 Q0.5 4 2.4 3.8 Q3 1 5.6 1 Q8.2 1 8.8 3.6" fill="none" stroke="#d8d8e0" stroke-width="0.9"/><circle cx="7.6" cy="6.6" r="2.9" fill="#d8d8e0"/><path d="M6.2 6.6 L7.3 7.6 L9 5.7" fill="none" stroke="#1e1e29" stroke-width="0.8"/></svg>
<!-- export -->
<div class="a" style="left:865px;top:27.3px;width:55.8px;height:20.2px;border-radius:3px;background:#5a4cdc"></div>
<div class="t" style="left:876.3px;top:34.6px;font-size:8.3px;color:#f2f2fb;-webkit-text-stroke:0.1px #f2f2fb">Export</div>
<svg style="left:905px;top:36.5px" width="5" height="4" viewBox="0 0 5 4"><path d="M0.5 0.7 L2.5 2.8 L4.5 0.7" fill="none" stroke="#ececf8" stroke-width="0.8"/></svg>
<div class="a" style="left:896.9px;top:57.4px;width:23.2px;height:14.9px;border-radius:2.5px;border:1px solid #4c4c58"></div>
<div class="t" style="left:896.9px;top:62.6px;width:23.2px;text-align:center;font-family:'Liberation Mono',monospace;font-weight:700;font-size:6.6px;color:#e4e4ea">16:9</div>

<!-- playback -->
<svg style="left:532px;top:400px" width="9" height="9" viewBox="0 0 9 9"><rect x="0.8" y="0.8" width="1.3" height="7.2" fill="#d2d2da"/><path d="M8.5 0.8 L2.4 4.4 L8.5 8Z" fill="#d2d2da"/></svg>
<svg style="left:550.5px;top:399px" width="11" height="11" viewBox="0 0 11 11"><path d="M3.2 2.2 A4.2 4.2 0 1 0 5.5 1.3" fill="none" stroke="#c4c4cc" stroke-width="0.9"/><path d="M5.6 0 L3.6 1.4 L5.6 2.8Z" fill="#c4c4cc"/><path d="M4.6 4.6 L5.8 3.8 V7.6" fill="none" stroke="#c4c4cc" stroke-width="0.8"/></svg>
<svg style="left:572px;top:400px" width="10" height="10" viewBox="0 0 10 10"><path d="M0.2 0 L9.4 4.7 L0.2 9.4Z" fill="#f2f2f6"/></svg>
<svg style="left:590.5px;top:399px" width="11" height="11" viewBox="0 0 11 11"><path d="M7.8 2.2 A4.2 4.2 0 1 1 5.5 1.3" fill="none" stroke="#c4c4cc" stroke-width="0.9"/><path d="M5.4 0 L7.4 1.4 L5.4 2.8Z" fill="#c4c4cc"/><path d="M4.6 4.6 L5.8 3.8 V7.6" fill="none" stroke="#c4c4cc" stroke-width="0.8"/></svg>
<svg style="left:610.5px;top:400px" width="9" height="9" viewBox="0 0 9 9"><rect x="6.9" y="0.8" width="1.3" height="7.2" fill="#d2d2da"/><path d="M0.5 0.8 L6.6 4.4 L0.5 8Z" fill="#d2d2da"/></svg>
<svg style="left:851.5px;top:400px" width="9" height="9" viewBox="0 0 9 9" fill="none" stroke="#c8c8d0" stroke-width="0.9"><path d="M0.5 3 V0.5 H3 M6 0.5 H8.5 V3 M8.5 6 V8.5 H6 M3 8.5 H0.5 V6"/></svg>

<svg style="left:897px;top:429px" width="22" height="7" viewBox="0 0 22 7"><path d="M0 7 L3 0.8 Q3.3 0 4 0 H18 Q18.7 0 19 0.8 L22 7Z" fill="#24242e"/><path d="M9 2.5 L11 4.3 L13 2.5" fill="none" stroke="#b8b8c4" stroke-width="0.7"/></svg>
<div class="a" style="left:199.7px;top:442px;width:15.5px;height:15.5px;border-radius:2px;background:#20202a"></div>
<div class="a" style="left:219.2px;top:442px;width:15.5px;height:15.5px;border-radius:2px;background:#20202a"></div>
<div class="a" style="left:239.2px;top:442px;width:15.5px;height:15.5px;border-radius:2px;background:#20202a"></div>
<div class="a" style="left:259px;top:442px;width:15.5px;height:15.5px;border-radius:2px;background:#20202a"></div>
<div class="a" style="left:279px;top:442px;width:15.5px;height:15.5px;border-radius:2px;background:#20202a"></div>
<svg style="left:203px;top:445.5px" width="9" height="9" viewBox="0 0 9 9" fill="none" stroke="#b9b9c4" stroke-width="0.85"><path d="M2.2 1 L0.8 2.6 L2.2 4.2 M0.8 2.6 H5.2 Q7.8 2.6 7.8 5.3 Q7.8 8 5.2 8 H2.5"/></svg>
<svg style="left:222.5px;top:445.5px" width="9" height="9" viewBox="0 0 9 9" fill="none" stroke="#b9b9c4" stroke-width="0.85"><path d="M6.8 1 L8.2 2.6 L6.8 4.2 M8.2 2.6 H3.8 Q1.2 2.6 1.2 5.3 Q1.2 8 3.8 8 H6.5"/></svg>
<svg style="left:242.5px;top:445.5px" width="9" height="9" viewBox="0 0 9 9" fill="none" stroke="#b9b9c4" stroke-width="0.85"><path d="M2.2 0.5 L5.8 5.6 M6.8 0.5 L3.2 5.6"/><circle cx="2.5" cy="7" r="1.4"/><circle cx="6.5" cy="7" r="1.4"/></svg>
<svg style="left:262.5px;top:445px" width="9" height="10" viewBox="0 0 9 10" fill="none" stroke="#b9b9c4" stroke-width="0.85"><path d="M0.6 2.2 H8.4 M3 2.2 V0.8 H6 V2.2 M1.5 2.2 L2 9.2 H7 L7.5 2.2 M3.8 4 V7.5"/></svg>
<svg style="left:282.5px;top:445px" width="9" height="10" viewBox="0 0 9 10"><rect x="0.8" y="0.6" width="5.5" height="8.4" rx="1" fill="none" stroke="#b9b9c4" stroke-width="0.85"/><rect x="2" y="1.8" width="2" height="4" fill="#b9b9c4"/><circle cx="6.5" cy="7.5" r="2.1" fill="#b9b9c4"/><circle cx="6.5" cy="7.5" r="0.9" fill="#20202a"/></svg>
<div class="t" style="left:543.5px;top:448px;font-family:'Liberation Mono',monospace;font-size:7px;color:#7a7a86"><b style="color:#e2e2ea">0:04</b>.00 / <b style="color:#e2e2ea">1:25</b>.00</div>
<div class="a" style="left:860.8px;top:440.6px;width:15.4px;height:15.4px;border-radius:2px;background:#20202a"></div>
<div class="a" style="left:880.4px;top:440.6px;width:15.4px;height:15.4px;border-radius:2px;background:#20202a"></div>
<div class="a" style="left:900.3px;top:440.6px;width:15.4px;height:15.4px;border-radius:2px;background:#20202a"></div>
<svg style="left:864.5px;top:444.3px" width="8" height="8" viewBox="0 0 8 8" fill="none" stroke="#b9b9c4" stroke-width="0.85"><path d="M4 0.5 V7.5 M0.5 4 H7.5"/></svg>
<svg style="left:884px;top:444.3px" width="8" height="8" viewBox="0 0 8 8" fill="none" stroke="#b9b9c4" stroke-width="0.85"><path d="M0.5 4 H7.5"/></svg>
<svg style="left:904px;top:444px" width="8" height="8" viewBox="0 0 8 8" fill="none" stroke="#b9b9c4" stroke-width="0.8"><path d="M7.5 0.5 L4.6 3.4 M4.6 1.2 V3.4 H6.8 M0.5 7.5 L3.4 4.6 M1.2 4.6 H3.4 V6.8"/></svg>
<div class="t" style="left:196.8px;top:465.8px;font-family:'Liberation Mono',monospace;font-size:6.2px;color:#6e6e7a">0</div>
<div class="a" style="left:353.2px;top:463px;width:0.7px;height:9px;background:#34343e"></div>
<div class="t" style="left:354.7px;top:465.8px;font-family:'Liberation Mono',monospace;font-size:6.5px;color:#6e6e7a">0:02</div>
<div class="a" style="left:492.5px;top:463px;width:0.7px;height:9px;background:#34343e"></div>
<div class="t" style="left:494.0px;top:465.8px;font-family:'Liberation Mono',monospace;font-size:6.5px;color:#6e6e7a">0:04</div>
<div class="a" style="left:633.6px;top:463px;width:0.7px;height:9px;background:#34343e"></div>
<div class="t" style="left:635.1px;top:465.8px;font-family:'Liberation Mono',monospace;font-size:6.5px;color:#6e6e7a">0:06</div>
<div class="a" style="left:773.4px;top:463px;width:0.7px;height:9px;background:#34343e"></div>
<div class="t" style="left:774.9px;top:465.8px;font-family:'Liberation Mono',monospace;font-size:6.5px;color:#6e6e7a">0:08</div>
<div class="a" style="left:914.5px;top:463px;width:0.7px;height:9px;background:#34343e"></div>
<div class="t" style="left:916.0px;top:465.8px;font-family:'Liberation Mono',monospace;font-size:6.5px;color:#6e6e7a">0:10</div>
<div class="a" style="left:276px;top:463px;width:0.7px;height:5px;background:#2e2e38"></div>
<div class="a" style="left:427.7px;top:463px;width:0.7px;height:5px;background:#2e2e38"></div>
<div class="a" style="left:568px;top:463px;width:0.7px;height:5px;background:#2e2e38"></div>
<div class="a" style="left:708.4px;top:463px;width:0.7px;height:5px;background:#2e2e38"></div>
<div class="a" style="left:867.3px;top:463px;width:0.7px;height:5px;background:#2e2e38"></div>
<div class="a" style="left:196.2px;top:483px;width:729.8px;height:17px;border-radius:2px 0 0 0;background:#1e1e29"></div>
<div class="a" style="left:196.2px;top:500px;width:157.10000000000002px;height:15px;border-radius:2px;background:#5b4ad8"></div><svg style="left:200.7px;top:504px" width="6" height="8" viewBox="0 0 6 8" fill="none" stroke="#c9c2f4" stroke-width="0.6"><path d="M0.3 1.3 V0.4 H5.7 V1.3 M3 0.4 V7.6 M2 7.6 H4"/></svg><div class="t" style="left:212.0px;top:506px;font-size:6.9px;color:#ecebfb;-webkit-text-stroke:0.1px #ecebfb">FruiTea</div>
<div class="a" style="left:355.3px;top:500px;width:136.0px;height:15px;border-radius:2px;background:#5b4ad8"></div><svg style="left:359.8px;top:504px" width="6" height="8" viewBox="0 0 6 8" fill="none" stroke="#c9c2f4" stroke-width="0.6"><path d="M0.3 1.3 V0.4 H5.7 V1.3 M3 0.4 V7.6 M2 7.6 H4"/></svg><div class="t" style="left:371.1px;top:506px;font-size:6.9px;color:#ecebfb;-webkit-text-stroke:0.1px #ecebfb">Color Palette</div>
<div class="a" style="left:633.7px;top:500px;width:138.5px;height:15px;border-radius:2px;background:#5b4ad8"></div><svg style="left:638.2px;top:504px" width="6" height="8" viewBox="0 0 6 8" fill="none" stroke="#c9c2f4" stroke-width="0.6"><path d="M0.3 1.3 V0.4 H5.7 V1.3 M3 0.4 V7.6 M2 7.6 H4"/></svg><div class="t" style="left:649.5px;top:506px;font-size:6.9px;color:#ecebfb;-webkit-text-stroke:0.1px #ecebfb">Spicy Punch</div>
<svg style="left:196.2px;top:519px" width="157.1" height="31.5" viewBox="0 0 157.1 31.5"><defs><clipPath id="vc196"><rect width="157.1" height="31.5" rx="2"/></clipPath></defs><g clip-path="url(#vc196)"><rect width="157.1" height="31.5" fill="#f6f6f6"/><use href="#logo" x="13.77" y="-0.96" width="35.46" height="31.92"/><use href="#logo" x="64.67" y="-0.96" width="35.46" height="31.92"/><use href="#logo" x="109.27" y="-0.96" width="35.46" height="31.92"/></g></svg>
<svg style="left:355.3px;top:519px" width="136.0" height="31.5" viewBox="0 0 136.0 31.5"><defs><clipPath id="vc355"><rect width="136.0" height="31.5" rx="2"/></clipPath></defs><g clip-path="url(#vc355)"><rect width="136" height="31.5" fill="#fdfaf7"/><rect x="2" y="2.5" width="14" height="1.2" fill="#9fb0c6"/><circle cx="5.0" cy="10.5" r="1.3" fill="#20365a"/><circle cx="8.4" cy="10.5" r="1.3" fill="#efc75e"/><circle cx="11.8" cy="10.5" r="1.3" fill="#f4b89a"/><circle cx="15.2" cy="10.5" r="1.3" fill="#e2574a"/><circle cx="5.0" cy="18.5" r="1.3" fill="#5a7aa0"/><circle cx="8.4" cy="18.5" r="1.3" fill="#efc75e"/><circle cx="11.8" cy="18.5" r="1.3" fill="#f4b89a"/><circle cx="15.2" cy="18.5" r="1.3" fill="#2f9a4a"/><circle cx="5.0" cy="26.5" r="1.3" fill="#5fb0c8"/><circle cx="8.4" cy="26.5" r="1.3" fill="#9fd0d8"/><circle cx="11.8" cy="26.5" r="1.3" fill="#d8d8e0"/><rect x="22.6" width="35" height="31.5" fill="#fbd2bc"/><rect x="30.6" y="2.5" width="19" height="1.1" fill="#8a8a9a"/><ellipse cx="39.3" cy="19.8" rx="2.8" ry="2.0" fill="#22385c"/><ellipse cx="40.2" cy="20.3" rx="1.6" ry="2.1" fill="#22385c"/><ellipse cx="42.3" cy="24.7" rx="1.5" ry="1.8" fill="#22385c"/><ellipse cx="33.1" cy="25.0" rx="2.4" ry="1.4" fill="#22385c"/><ellipse cx="48.3" cy="28.3" rx="2.3" ry="2.3" fill="#22385c"/><ellipse cx="34.3" cy="8.3" rx="2.1" ry="1.4" fill="#22385c"/><ellipse cx="34.8" cy="13.1" rx="1.3" ry="2.0" fill="#22385c"/><ellipse cx="39.1" cy="25.7" rx="2.1" ry="2.3" fill="#22385c"/><ellipse cx="40.1" cy="21.9" rx="2.0" ry="1.7" fill="#22385c"/><ellipse cx="48.6" cy="28.9" rx="2.6" ry="2.4" fill="#22385c"/><ellipse cx="37.0" cy="12.8" rx="1.8" ry="1.4" fill="#22385c"/><ellipse cx="44.6" cy="16.4" rx="2.7" ry="1.9" fill="#22385c"/><ellipse cx="47.9" cy="25.8" rx="1.3" ry="1.6" fill="#22385c"/><ellipse cx="47.1" cy="17.9" rx="2.9" ry="1.9" fill="#22385c"/><ellipse cx="32.8" cy="21.2" rx="2.5" ry="1.7" fill="#22385c"/><ellipse cx="33.1" cy="15.0" rx="2.8" ry="2.5" fill="#22385c"/><ellipse cx="33.6" cy="13.2" rx="1.5" ry="1.4" fill="#22385c"/><ellipse cx="45.1" cy="11.7" rx="2.2" ry="2.0" fill="#22385c"/><rect x="60" y="2.5" width="14" height="1.2" fill="#9fb0c6"/><circle cx="63.0" cy="10.5" r="1.3" fill="#20365a"/><circle cx="66.4" cy="10.5" r="1.3" fill="#efc75e"/><circle cx="69.8" cy="10.5" r="1.3" fill="#f4b89a"/><circle cx="73.2" cy="10.5" r="1.3" fill="#e2574a"/><circle cx="63.0" cy="18.5" r="1.3" fill="#5a7aa0"/><circle cx="66.4" cy="18.5" r="1.3" fill="#efc75e"/><circle cx="69.8" cy="18.5" r="1.3" fill="#f4b89a"/><circle cx="73.2" cy="18.5" r="1.3" fill="#2f9a4a"/><circle cx="63.0" cy="26.5" r="1.3" fill="#5fb0c8"/><circle cx="66.4" cy="26.5" r="1.3" fill="#9fd0d8"/><circle cx="69.8" cy="26.5" r="1.3" fill="#d8d8e0"/><rect x="80.6" width="35" height="31.5" fill="#fbd2bc"/><rect x="88.6" y="2.5" width="19" height="1.1" fill="#8a8a9a"/><ellipse cx="92.8" cy="23.4" rx="1.5" ry="2.3" fill="#22385c"/><ellipse cx="91.6" cy="16.8" rx="1.6" ry="1.7" fill="#22385c"/><ellipse cx="106.1" cy="24.9" rx="1.8" ry="2.7" fill="#22385c"/><ellipse cx="93.2" cy="16.3" rx="2.7" ry="2.3" fill="#22385c"/><ellipse cx="91.3" cy="28.8" rx="1.6" ry="1.7" fill="#22385c"/><ellipse cx="102.7" cy="14.9" rx="1.8" ry="1.4" fill="#22385c"/><ellipse cx="91.1" cy="20.2" rx="1.7" ry="2.3" fill="#22385c"/><ellipse cx="95.9" cy="17.5" rx="2.8" ry="2.1" fill="#22385c"/><ellipse cx="99.4" cy="26.2" rx="1.6" ry="1.5" fill="#22385c"/><ellipse cx="105.0" cy="25.2" rx="1.7" ry="1.6" fill="#22385c"/><ellipse cx="102.2" cy="27.7" rx="1.6" ry="2.8" fill="#22385c"/><ellipse cx="104.6" cy="20.7" rx="2.0" ry="1.5" fill="#22385c"/><ellipse cx="90.3" cy="28.2" rx="1.7" ry="2.4" fill="#22385c"/><ellipse cx="94.0" cy="25.3" rx="2.3" ry="1.8" fill="#22385c"/><ellipse cx="92.6" cy="23.1" rx="1.4" ry="1.7" fill="#22385c"/><ellipse cx="99.1" cy="25.9" rx="2.3" ry="1.7" fill="#22385c"/><ellipse cx="105.2" cy="12.3" rx="1.3" ry="1.7" fill="#22385c"/><ellipse cx="97.2" cy="9.3" rx="1.6" ry="1.9" fill="#22385c"/><rect x="118" y="2.5" width="14" height="1.2" fill="#9fb0c6"/><circle cx="121.0" cy="10.5" r="1.3" fill="#20365a"/><circle cx="124.4" cy="10.5" r="1.3" fill="#efc75e"/><circle cx="127.8" cy="10.5" r="1.3" fill="#f4b89a"/><circle cx="131.2" cy="10.5" r="1.3" fill="#e2574a"/><circle cx="121.0" cy="18.5" r="1.3" fill="#5a7aa0"/><circle cx="124.4" cy="18.5" r="1.3" fill="#efc75e"/><circle cx="127.8" cy="18.5" r="1.3" fill="#f4b89a"/><circle cx="131.2" cy="18.5" r="1.3" fill="#2f9a4a"/><circle cx="121.0" cy="26.5" r="1.3" fill="#5fb0c8"/><circle cx="124.4" cy="26.5" r="1.3" fill="#9fd0d8"/><circle cx="127.8" cy="26.5" r="1.3" fill="#d8d8e0"/></g></svg>
<svg style="left:492.4px;top:519px" width="140.4" height="31.5" viewBox="0 0 140.4 31.5"><defs><clipPath id="vc492"><rect width="140.4" height="31.5" rx="2"/></clipPath></defs><g clip-path="url(#vc492)"><rect width="140.4" height="31.5" fill="#fdfdfd"/><rect x="0" width="28" height="31.5" fill="#f2c867"/><use href="#cup" x="4" y="2.5" width="20" height="26"/><use href="#logo" x="31.69" y="6.22" width="20.62" height="18.56"/><rect x="56" width="28" height="31.5" fill="#f2c867"/><use href="#cup" x="60" y="2.5" width="20" height="26"/><use href="#logo" x="87.69" y="6.22" width="20.62" height="18.56"/><rect x="112" width="28" height="31.5" fill="#f2c867"/><use href="#cup" x="116" y="2.5" width="20" height="26"/></g></svg>
<svg style="left:633.7px;top:519px" width="137.6" height="31.5" viewBox="0 0 137.6 31.5"><defs><clipPath id="vc633"><rect width="137.6" height="31.5" rx="2"/></clipPath></defs><g clip-path="url(#vc633)"><rect width="137.6" height="31.5" fill="#fdfdfd"/><rect x="5" y="2" width="9" height="1.1" fill="#8da0b8"/><rect x="5" y="7" width="15" height="22" fill="#20365a"/><rect x="5" y="7" width="15" height="22" fill="#20365a"/><polygon points="19.6,6.0 20.4,7.9 22.5,8.1 20.9,9.4 21.4,11.5 19.6,10.4 17.8,11.5 18.3,9.4 16.7,8.1 18.8,7.9" fill="#efc75e"/><ellipse cx="14.9" cy="22.2" rx="1.6" ry="2.0" transform="rotate(4 14.9 22.2)" fill="#72b9cc"/><circle cx="18.7" cy="22.4" r="1.6" fill="none" stroke="#e2574a" stroke-width="0.5"/><polygon points="6.1,5.9 6.8,7.5 8.6,7.7 7.2,8.8 7.6,10.6 6.1,9.6 4.6,10.6 5.0,8.8 3.7,7.7 5.4,7.5" fill="#f6f0e0"/><circle cx="6.1" cy="19.0" r="2.9" fill="none" stroke="#efc75e" stroke-width="0.5"/><circle cx="16.1" cy="9.8" r="2.1" fill="none" stroke="#f6f0e0" stroke-width="0.5"/><circle cx="15.3" cy="26.8" r="2.2" fill="none" stroke="#efc75e" stroke-width="0.5"/><rect x="8" y="12" width="9" height="8" fill="#eeeeee"/><rect x="25" y="0" width="32.5" height="31.5" fill="#20365a"/><ellipse cx="53.1" cy="18.0" rx="2.0" ry="2.8" transform="rotate(155 53.1 18.0)" fill="#efc75e"/><circle cx="27.6" cy="20.1" r="2.8" fill="none" stroke="#efc75e" stroke-width="0.5"/><ellipse cx="35.7" cy="29.4" rx="2.1" ry="2.6" transform="rotate(138 35.7 29.4)" fill="#f6f0e0"/><polygon points="41.9,13.7 42.5,15.3 44.3,15.4 42.9,16.6 43.3,18.2 41.9,17.3 40.4,18.2 40.8,16.6 39.5,15.4 41.2,15.3" fill="#efc75e"/><ellipse cx="32.5" cy="22.0" rx="2.4" ry="3.3" transform="rotate(65 32.5 22.0)" fill="#efc75e"/><ellipse cx="37.0" cy="4.5" rx="2.2" ry="3.1" transform="rotate(87 37.0 4.5)" fill="#efc75e"/><polygon points="55.2,12.7 56.0,14.6 58.1,14.8 56.5,16.1 57.0,18.1 55.2,17.0 53.5,18.1 54.0,16.1 52.4,14.8 54.5,14.6" fill="#f6f0e0"/><circle cx="31.5" cy="13.6" r="2.9" fill="none" stroke="#72b9cc" stroke-width="0.5"/><polygon points="37.5,15.8 38.2,17.4 40.0,17.6 38.6,18.7 39.0,20.5 37.5,19.5 36.0,20.5 36.4,18.7 35.0,17.6 36.8,17.4" fill="#eeb293"/><polygon points="36.4,25.7 37.1,27.3 38.8,27.4 37.5,28.6 37.9,30.2 36.4,29.3 34.9,30.2 35.3,28.6 34.0,27.4 35.7,27.3" fill="#e2574a"/><ellipse cx="51.7" cy="3.6" rx="2.9" ry="3.2" transform="rotate(97 51.7 3.6)" fill="#72b9cc"/><circle cx="41.9" cy="21.2" r="2.8" fill="none" stroke="#f6f0e0" stroke-width="0.5"/><polygon points="39.7,-1.3 40.7,1.0 43.2,1.2 41.3,2.9 41.8,5.3 39.7,4.0 37.6,5.3 38.2,2.9 36.3,1.2 38.7,1.0" fill="#efc75e"/><ellipse cx="47.0" cy="8.9" rx="2.4" ry="2.8" transform="rotate(164 47.0 8.9)" fill="#efc75e"/><circle cx="38.2" cy="6.0" r="2.0" fill="none" stroke="#eeb293" stroke-width="0.5"/><polygon points="50.9,28.4 51.6,30.1 53.3,30.2 52.0,31.4 52.4,33.1 50.9,32.1 49.4,33.1 49.8,31.4 48.5,30.2 50.2,30.1" fill="#eeb293"/><circle cx="46.3" cy="25.4" r="2.6" fill="none" stroke="#efc75e" stroke-width="0.5"/><circle cx="51.8" cy="8.1" r="2.7" fill="none" stroke="#eeb293" stroke-width="0.5"/><polygon points="48.2,2.8 49.0,4.6 51.0,4.8 49.4,6.0 49.9,8.0 48.2,6.9 46.5,8.0 47.0,6.0 45.5,4.8 47.4,4.6" fill="#efc75e"/><circle cx="55.8" cy="15.8" r="1.8" fill="none" stroke="#f6f0e0" stroke-width="0.5"/><circle cx="54.5" cy="2.7" r="2.6" fill="none" stroke="#f6f0e0" stroke-width="0.5"/><circle cx="39.6" cy="6.2" r="1.6" fill="none" stroke="#eeb293" stroke-width="0.5"/><circle cx="43.5" cy="27.7" r="2.9" fill="none" stroke="#efc75e" stroke-width="0.5"/><polygon points="35.6,27.3 36.6,29.6 39.0,29.8 37.2,31.4 37.7,33.9 35.6,32.6 33.5,33.9 34.1,31.4 32.2,29.8 34.7,29.6" fill="#e2574a"/><polygon points="55.0,0.9 55.8,2.8 57.8,3.0 56.3,4.3 56.8,6.3 55.0,5.2 53.3,6.3 53.8,4.3 52.2,3.0 54.3,2.8" fill="#f6f0e0"/><circle cx="56.8" cy="16.9" r="2.0" fill="none" stroke="#efc75e" stroke-width="0.5"/><polygon points="52.8,8.0 53.6,9.9 55.7,10.0 54.1,11.4 54.6,13.4 52.8,12.3 51.0,13.4 51.5,11.4 49.9,10.0 52.0,9.9" fill="#f6f0e0"/><circle cx="38.7" cy="8.7" r="1.9" fill="none" stroke="#efc75e" stroke-width="0.5"/><ellipse cx="38.9" cy="1.1" rx="2.5" ry="3.3" transform="rotate(120 38.9 1.1)" fill="#efc75e"/><ellipse cx="57.5" cy="28.4" rx="2.5" ry="2.6" transform="rotate(126 57.5 28.4)" fill="#eeb293"/><polygon points="55.8,-0.4 56.7,1.6 58.8,1.7 57.2,3.1 57.7,5.2 55.8,4.1 54.0,5.2 54.5,3.1 52.9,1.7 55.0,1.6" fill="#efc75e"/><ellipse cx="54.5" cy="4" rx="4" ry="4" fill="#e2574a"/><rect x="62.5" y="2" width="9" height="1.1" fill="#8da0b8"/><rect x="62.5" y="7" width="15" height="22" fill="#20365a"/><rect x="62.5" y="7" width="15" height="22" fill="#20365a"/><polygon points="75.0,16.2 75.8,18.2 77.9,18.4 76.3,19.8 76.8,21.9 75.0,20.8 73.1,21.9 73.6,19.8 72.0,18.4 74.1,18.2" fill="#72b9cc"/><circle cx="66.3" cy="21.8" r="2.8" fill="none" stroke="#efc75e" stroke-width="0.5"/><circle cx="65.6" cy="25.7" r="2.3" fill="none" stroke="#efc75e" stroke-width="0.5"/><polygon points="70.0,13.6 70.6,15.2 72.3,15.3 71.0,16.4 71.4,18.0 70.0,17.1 68.5,18.0 68.9,16.4 67.7,15.3 69.3,15.2" fill="#efc75e"/><ellipse cx="62.9" cy="28.3" rx="2.0" ry="3.1" transform="rotate(144 62.9 28.3)" fill="#e2574a"/><polygon points="69.9,19.0 70.7,21.1 72.9,21.2 71.2,22.6 71.7,24.8 69.9,23.6 68.0,24.8 68.5,22.6 66.9,21.2 69.0,21.1" fill="#efc75e"/><ellipse cx="76.3" cy="24.6" rx="1.8" ry="2.7" transform="rotate(86 76.3 24.6)" fill="#e2574a"/><rect x="65.5" y="12" width="9" height="8" fill="#eeeeee"/><rect x="82.3" y="0" width="31.0" height="31.5" fill="#20365a"/><circle cx="110.2" cy="29.5" r="2.3" fill="none" stroke="#e2574a" stroke-width="0.5"/><circle cx="88.2" cy="19.5" r="1.8" fill="none" stroke="#efc75e" stroke-width="0.5"/><polygon points="83.4,2.1 84.1,3.9 86.1,4.0 84.6,5.3 85.0,7.2 83.4,6.2 81.8,7.2 82.2,5.3 80.7,4.0 82.7,3.9" fill="#efc75e"/><polygon points="93.3,16.1 94.2,18.3 96.6,18.5 94.8,20.0 95.3,22.3 93.3,21.1 91.3,22.3 91.9,20.0 90.1,18.5 92.4,18.3" fill="#f6f0e0"/><circle cx="108.7" cy="19.6" r="2.6" fill="none" stroke="#efc75e" stroke-width="0.5"/><circle cx="83.0" cy="19.9" r="2.5" fill="none" stroke="#e2574a" stroke-width="0.5"/><ellipse cx="88.6" cy="19.9" rx="2.2" ry="3.2" transform="rotate(156 88.6 19.9)" fill="#efc75e"/><circle cx="108.9" cy="7.3" r="2.7" fill="none" stroke="#efc75e" stroke-width="0.5"/><circle cx="92.1" cy="9.9" r="1.9" fill="none" stroke="#eeb293" stroke-width="0.5"/><polygon points="109.8,0.8 110.7,3.0 113.1,3.2 111.3,4.7 111.8,7.0 109.8,5.8 107.8,7.0 108.4,4.7 106.6,3.2 108.9,3.0" fill="#eeb293"/><circle cx="94.3" cy="13.7" r="2.4" fill="none" stroke="#72b9cc" stroke-width="0.5"/><ellipse cx="86.2" cy="12.7" rx="1.4" ry="2.3" transform="rotate(174 86.2 12.7)" fill="#f6f0e0"/><polygon points="110.6,27.4 111.4,29.4 113.5,29.5 111.9,30.9 112.4,33.0 110.6,31.9 108.7,33.0 109.2,30.9 107.6,29.5 109.7,29.4" fill="#72b9cc"/><polygon points="97.9,19.1 98.5,20.7 100.3,20.8 99.0,21.9 99.4,23.6 97.9,22.7 96.4,23.6 96.8,21.9 95.5,20.8 97.2,20.7" fill="#72b9cc"/><ellipse cx="83.1" cy="24.0" rx="2.8" ry="2.7" transform="rotate(48 83.1 24.0)" fill="#efc75e"/><polygon points="85.9,2.6 86.6,4.4 88.5,4.6 87.1,5.8 87.5,7.7 85.9,6.7 84.2,7.7 84.7,5.8 83.2,4.6 85.1,4.4" fill="#eeb293"/><circle cx="85.3" cy="2.0" r="2.2" fill="none" stroke="#f6f0e0" stroke-width="0.5"/><ellipse cx="92.4" cy="14.7" rx="2.1" ry="2.8" transform="rotate(3 92.4 14.7)" fill="#efc75e"/><polygon points="104.0,23.6 104.8,25.5 106.9,25.7 105.3,27.0 105.8,29.1 104.0,28.0 102.2,29.1 102.7,27.0 101.1,25.7 103.2,25.5" fill="#f6f0e0"/><ellipse cx="93.8" cy="29.0" rx="1.6" ry="3.1" transform="rotate(82 93.8 29.0)" fill="#f6f0e0"/><circle cx="107.2" cy="22.2" r="2.5" fill="none" stroke="#efc75e" stroke-width="0.5"/><ellipse cx="100.0" cy="6.0" rx="1.9" ry="3.1" transform="rotate(71 100.0 6.0)" fill="#e2574a"/><circle cx="105.4" cy="24.5" r="2.2" fill="none" stroke="#efc75e" stroke-width="0.5"/><circle cx="109.6" cy="21.9" r="2.7" fill="none" stroke="#72b9cc" stroke-width="0.5"/><circle cx="88.7" cy="5.8" r="2.0" fill="none" stroke="#e2574a" stroke-width="0.5"/><ellipse cx="82.6" cy="11.2" rx="2.4" ry="2.3" transform="rotate(170 82.6 11.2)" fill="#efc75e"/><ellipse cx="92.8" cy="20.8" rx="2.3" ry="2.5" transform="rotate(127 92.8 20.8)" fill="#72b9cc"/><ellipse cx="88.9" cy="3.8" rx="2.3" ry="2.2" transform="rotate(27 88.9 3.8)" fill="#f6f0e0"/><ellipse cx="89.6" cy="14.0" rx="2.6" ry="2.9" transform="rotate(2 89.6 14.0)" fill="#f6f0e0"/><ellipse cx="110.3" cy="4" rx="4" ry="4" fill="#e2574a"/><rect x="118.3" y="2" width="9" height="1.1" fill="#8da0b8"/><rect x="118.3" y="7" width="15" height="22" fill="#20365a"/><rect x="118.3" y="7" width="15" height="22" fill="#20365a"/><polygon points="122.2,9.9 123.0,11.9 125.2,12.1 123.5,13.5 124.0,15.6 122.2,14.5 120.3,15.6 120.8,13.5 119.2,12.1 121.3,11.9" fill="#efc75e"/><circle cx="132.8" cy="19.5" r="2.5" fill="none" stroke="#e2574a" stroke-width="0.5"/><circle cx="119.4" cy="20.1" r="1.7" fill="none" stroke="#f6f0e0" stroke-width="0.5"/><circle cx="124.1" cy="28.3" r="2.4" fill="none" stroke="#eeb293" stroke-width="0.5"/><ellipse cx="119.2" cy="27.8" rx="2.2" ry="2.8" transform="rotate(93 119.2 27.8)" fill="#efc75e"/><ellipse cx="122.6" cy="21.4" rx="1.9" ry="3.0" transform="rotate(75 122.6 21.4)" fill="#efc75e"/><polygon points="118.5,9.8 119.2,11.4 121.0,11.6 119.6,12.8 120.0,14.5 118.5,13.6 117.0,14.5 117.4,12.8 116.0,11.6 117.8,11.4" fill="#efc75e"/><rect x="121.3" y="12" width="9" height="8" fill="#eeeeee"/></g></svg>
<svg style="left:773px;top:519px" width="139.8" height="31.5" viewBox="0 0 139.8 31.5"><defs><clipPath id="vc773"><rect width="139.8" height="31.5" rx="2"/></clipPath></defs><g clip-path="url(#vc773)"><rect width="139.8" height="31.5" fill="#f2efea"/><path d="M4 3 L11 14 M21 4 L16 13" stroke="#d8c8a0" stroke-width="0.5"/><path d="M7 17 L17 17 L16 31 L8 31Z" fill="#d49a38"/><rect x="7" y="14.5" width="10" height="5" rx="2" fill="#e8dcc0"/><ellipse cx="18" cy="16.5" rx="2.6" ry="3.5" fill="#f0c850"/><rect x="23.4" width="33.1" height="31.5" fill="#5e9de0"/><ellipse cx="47.894" cy="8" rx="4" ry="5.5" fill="#c09080"/><ellipse cx="47.894" cy="3.5" rx="4" ry="2.5" fill="#3a2a22"/><ellipse cx="39.288" cy="10" rx="4" ry="4" fill="#9a6a4a"/><ellipse cx="39.288" cy="6" rx="5" ry="2.5" fill="#8a5a3a"/><ellipse cx="30.02" cy="21" rx="7" ry="10" fill="#3a2820"/><ellipse cx="32.006" cy="23" rx="3.5" ry="5" fill="#a06a48"/><ellipse cx="43.26" cy="21" rx="6.5" ry="8" fill="#c25a30"/><ellipse cx="43.590999999999994" cy="22" rx="4" ry="5.5" fill="#e2a482"/><ellipse cx="52.528" cy="23" rx="5" ry="9" fill="#3a2a24"/><ellipse cx="52.197" cy="23" rx="3.5" ry="6" fill="#d9a080"/><rect x="23.4" y="27" width="10.592" height="5" fill="#d0a020"/><path d="M60.5 3 L67.5 14 M77.5 4 L72.5 13" stroke="#d8c8a0" stroke-width="0.5"/><path d="M63.5 17 L73.5 17 L72.5 31 L64.5 31Z" fill="#d49a38"/><rect x="63.5" y="14.5" width="10" height="5" rx="2" fill="#e8dcc0"/><ellipse cx="74.5" cy="16.5" rx="2.6" ry="3.5" fill="#f0c850"/><rect x="80.2" width="32.3" height="31.5" fill="#5e9de0"/><ellipse cx="104.102" cy="8" rx="4" ry="5.5" fill="#c09080"/><ellipse cx="104.102" cy="3.5" rx="4" ry="2.5" fill="#3a2a22"/><ellipse cx="95.70400000000001" cy="10" rx="4" ry="4" fill="#9a6a4a"/><ellipse cx="95.70400000000001" cy="6" rx="5" ry="2.5" fill="#8a5a3a"/><ellipse cx="86.66" cy="21" rx="7" ry="10" fill="#3a2820"/><ellipse cx="88.598" cy="23" rx="3.5" ry="5" fill="#a06a48"/><ellipse cx="99.58" cy="21" rx="6.5" ry="8" fill="#c25a30"/><ellipse cx="99.903" cy="22" rx="4" ry="5.5" fill="#e2a482"/><ellipse cx="108.624" cy="23" rx="5" ry="9" fill="#3a2a24"/><ellipse cx="108.301" cy="23" rx="3.5" ry="6" fill="#d9a080"/><rect x="80.2" y="27" width="10.335999999999999" height="5" fill="#d0a020"/><path d="M116.5 3 L123.5 14 M133.5 4 L128.5 13" stroke="#d8c8a0" stroke-width="0.5"/><path d="M119.5 17 L129.5 17 L128.5 31 L120.5 31Z" fill="#d49a38"/><rect x="119.5" y="14.5" width="10" height="5" rx="2" fill="#e8dcc0"/><ellipse cx="130.5" cy="16.5" rx="2.6" ry="3.5" fill="#f0c850"/><rect x="136.7" width="3.1" height="31.5" fill="#5e9de0"/></g></svg>
<svg style="left:914.3px;top:519px" width="11.7" height="31.5" viewBox="0 0 11.7 31.5"><defs><clipPath id="vc914"><rect width="11.7" height="31.5" rx="2"/></clipPath></defs><g clip-path="url(#vc914)"><rect width="11.5" height="31.5" fill="#efe9e6"/><ellipse cx="8" cy="19" rx="8" ry="12" fill="#c99a62"/><ellipse cx="8" cy="19" rx="5.5" ry="9" fill="#e2b292"/><path d="M3 16 h4 v2.5 h-4z M8 16 h4 v2.5 h-4z" fill="none" stroke="#2a2a2a" stroke-width="0.7"/><rect x="0" y="28" width="11.5" height="4" fill="#c03030"/></g></svg>
<svg style="left:196.2px;top:554.2px" width="729.8" height="15" viewBox="0 0 729.8 15"><defs><clipPath id="auc"><rect width="729.8" height="15" rx="2"/></clipPath></defs><g clip-path="url(#auc)"><rect width="729.8" height="15" fill="#3b6fdc"/><ellipse cx="8.8" cy="8.4" rx="2.6" ry="4" fill="#6a93e4" opacity="0.8"/><ellipse cx="18.6" cy="8.4" rx="2.6" ry="4" fill="#6a93e4" opacity="0.8"/><ellipse cx="28.3" cy="8.4" rx="2.6" ry="4" fill="#6a93e4" opacity="0.8"/><ellipse cx="38.1" cy="8.4" rx="2.6" ry="4" fill="#6a93e4" opacity="0.8"/><ellipse cx="47.8" cy="8.4" rx="2.6" ry="4" fill="#6a93e4" opacity="0.8"/><ellipse cx="57.6" cy="8.4" rx="2.6" ry="4" fill="#6a93e4" opacity="0.8"/><ellipse cx="67.3" cy="8.4" rx="2.6" ry="4" fill="#6a93e4" opacity="0.8"/><ellipse cx="77.1" cy="8.4" rx="2.6" ry="4" fill="#6a93e4" opacity="0.8"/><ellipse cx="86.8" cy="8.4" rx="2.6" ry="4" fill="#6a93e4" opacity="0.8"/><ellipse cx="96.6" cy="8.4" rx="2.6" ry="4" fill="#6a93e4" opacity="0.8"/><path d="M100.3 8.4 Q102.3 4.5 103.8 4.1 Q105.3 4.5 107.3 8.4 Q105.3 12.3 103.8 12.7 Q102.3 12.3 100.3 8.4Z" fill="#86a8ec" opacity="0.6"/><path d="M110.1 8.4 Q112.1 4.0 113.6 3.5 Q115.1 4.0 117.1 8.4 Q115.1 12.8 113.6 13.3 Q112.1 12.8 110.1 8.4Z" fill="#86a8ec" opacity="0.6"/><path d="M119.8 8.4 Q121.8 4.7 123.3 4.3 Q124.8 4.7 126.8 8.4 Q124.8 12.1 123.3 12.5 Q121.8 12.1 119.8 8.4Z" fill="#86a8ec" opacity="0.6"/><path d="M129.6 8.4 Q131.6 5.0 133.1 4.7 Q134.6 5.0 136.6 8.4 Q134.6 11.8 133.1 12.1 Q131.6 11.8 129.6 8.4Z" fill="#86a8ec" opacity="0.6"/><path d="M139.3 8.4 Q141.3 4.3 142.8 3.8 Q144.3 4.3 146.3 8.4 Q144.3 12.5 142.8 13.0 Q141.3 12.5 139.3 8.4Z" fill="#86a8ec" opacity="0.6"/><path d="M149.1 8.4 Q151.1 4.1 152.6 3.6 Q154.1 4.1 156.1 8.4 Q154.1 12.7 152.6 13.2 Q151.1 12.7 149.1 8.4Z" fill="#86a8ec" opacity="0.6"/><path d="M158.8 8.4 Q160.8 4.9 162.3 4.5 Q163.8 4.9 165.8 8.4 Q163.8 11.9 162.3 12.3 Q160.8 11.9 158.8 8.4Z" fill="#86a8ec" opacity="0.6"/><path d="M168.6 8.4 Q170.6 4.9 172.1 4.5 Q173.6 4.9 175.6 8.4 Q173.6 11.9 172.1 12.3 Q170.6 11.9 168.6 8.4Z" fill="#86a8ec" opacity="0.6"/><path d="M178.3 8.4 Q180.3 4.1 181.8 3.6 Q183.3 4.1 185.3 8.4 Q183.3 12.7 181.8 13.2 Q180.3 12.7 178.3 8.4Z" fill="#86a8ec" opacity="0.6"/><path d="M188.1 8.4 Q190.1 4.3 191.6 3.9 Q193.1 4.3 195.1 8.4 Q193.1 12.5 191.6 12.9 Q190.1 12.5 188.1 8.4Z" fill="#86a8ec" opacity="0.6"/><path d="M197.8 8.4 Q199.8 5.0 201.3 4.7 Q202.8 5.0 204.8 8.4 Q202.8 11.8 201.3 12.1 Q199.8 11.8 197.8 8.4Z" fill="#86a8ec" opacity="0.6"/><path d="M207.6 8.4 Q209.6 4.6 211.1 4.2 Q212.6 4.6 214.6 8.4 Q212.6 12.2 211.1 12.6 Q209.6 12.2 207.6 8.4Z" fill="#86a8ec" opacity="0.6"/><path d="M217.3 8.4 Q219.3 4.0 220.8 3.5 Q222.3 4.0 224.3 8.4 Q222.3 12.8 220.8 13.3 Q219.3 12.8 217.3 8.4Z" fill="#86a8ec" opacity="0.6"/><path d="M227.1 8.4 Q229.1 4.6 230.6 4.2 Q232.1 4.6 234.1 8.4 Q232.1 12.2 230.6 12.6 Q229.1 12.2 227.1 8.4Z" fill="#86a8ec" opacity="0.6"/><path d="M236.8 8.4 Q238.8 5.1 240.3 4.7 Q241.8 5.1 243.8 8.4 Q241.8 11.7 240.3 12.1 Q238.8 11.7 236.8 8.4Z" fill="#86a8ec" opacity="0.6"/><path d="M246.6 8.4 Q248.6 4.3 250.1 3.9 Q251.6 4.3 253.6 8.4 Q251.6 12.5 250.1 12.9 Q248.6 12.5 246.6 8.4Z" fill="#86a8ec" opacity="0.6"/><path d="M256.3 8.4 Q258.3 4.1 259.8 3.6 Q261.3 4.1 263.3 8.4 Q261.3 12.7 259.8 13.2 Q258.3 12.7 256.3 8.4Z" fill="#86a8ec" opacity="0.6"/><path d="M266.1 8.4 Q268.1 4.8 269.6 4.5 Q271.1 4.8 273.1 8.4 Q271.1 12.0 269.6 12.3 Q268.1 12.0 266.1 8.4Z" fill="#86a8ec" opacity="0.6"/><path d="M275.8 8.4 Q277.8 4.9 279.3 4.5 Q280.8 4.9 282.8 8.4 Q280.8 11.9 279.3 12.3 Q277.8 11.9 275.8 8.4Z" fill="#86a8ec" opacity="0.6"/><path d="M285.6 8.4 Q287.6 4.1 289.1 3.6 Q290.6 4.1 292.6 8.4 Q290.6 12.7 289.1 13.2 Q287.6 12.7 285.6 8.4Z" fill="#86a8ec" opacity="0.6"/><path d="M295.3 8.4 Q297.3 4.2 298.8 3.8 Q300.3 4.2 302.3 8.4 Q300.3 12.6 298.8 13.0 Q297.3 12.6 295.3 8.4Z" fill="#86a8ec" opacity="0.6"/><path d="M305.1 8.4 Q307.1 5.0 308.6 4.6 Q310.1 5.0 312.1 8.4 Q310.1 11.8 308.6 12.2 Q307.1 11.8 305.1 8.4Z" fill="#86a8ec" opacity="0.6"/><path d="M314.8 8.4 Q316.8 4.7 318.3 4.3 Q319.8 4.7 321.8 8.4 Q319.8 12.1 318.3 12.5 Q316.8 12.1 314.8 8.4Z" fill="#86a8ec" opacity="0.6"/><path d="M324.6 8.4 Q326.6 4.0 328.1 3.5 Q329.6 4.0 331.6 8.4 Q329.6 12.8 328.1 13.3 Q326.6 12.8 324.6 8.4Z" fill="#86a8ec" opacity="0.6"/><path d="M334.3 8.4 Q336.3 4.5 337.8 4.1 Q339.3 4.5 341.3 8.4 Q339.3 12.3 337.8 12.7 Q336.3 12.3 334.3 8.4Z" fill="#86a8ec" opacity="0.6"/><path d="M344.1 8.4 Q346.1 5.1 347.6 4.7 Q349.1 5.1 351.1 8.4 Q349.1 11.7 347.6 12.1 Q346.1 11.7 344.1 8.4Z" fill="#86a8ec" opacity="0.6"/><path d="M353.8 8.4 Q355.8 4.4 357.3 4.0 Q358.8 4.4 360.8 8.4 Q358.8 12.4 357.3 12.8 Q355.8 12.4 353.8 8.4Z" fill="#86a8ec" opacity="0.6"/><path d="M363.6 8.4 Q365.6 4.0 367.1 3.5 Q368.6 4.0 370.6 8.4 Q368.6 12.8 367.1 13.3 Q365.6 12.8 363.6 8.4Z" fill="#86a8ec" opacity="0.6"/><path d="M373.3 8.4 Q375.3 4.8 376.8 4.4 Q378.3 4.8 380.3 8.4 Q378.3 12.0 376.8 12.4 Q375.3 12.0 373.3 8.4Z" fill="#86a8ec" opacity="0.6"/><path d="M383.1 8.4 Q385.1 5.0 386.6 4.6 Q388.1 5.0 390.1 8.4 Q388.1 11.8 386.6 12.2 Q385.1 11.8 383.1 8.4Z" fill="#86a8ec" opacity="0.6"/><path d="M392.8 8.4 Q394.8 4.2 396.3 3.7 Q397.8 4.2 399.8 8.4 Q397.8 12.6 396.3 13.1 Q394.8 12.6 392.8 8.4Z" fill="#86a8ec" opacity="0.6"/><path d="M402.6 8.4 Q404.6 4.2 406.1 3.7 Q407.6 4.2 409.6 8.4 Q407.6 12.6 406.1 13.1 Q404.6 12.6 402.6 8.4Z" fill="#86a8ec" opacity="0.6"/><path d="M412.3 8.4 Q414.3 5.0 415.8 4.6 Q417.3 5.0 419.3 8.4 Q417.3 11.8 415.8 12.2 Q414.3 11.8 412.3 8.4Z" fill="#86a8ec" opacity="0.6"/><path d="M422.1 8.4 Q424.1 4.8 425.6 4.4 Q427.1 4.8 429.1 8.4 Q427.1 12.0 425.6 12.4 Q424.1 12.0 422.1 8.4Z" fill="#86a8ec" opacity="0.6"/><path d="M431.8 8.4 Q433.8 4.0 435.3 3.5 Q436.8 4.0 438.8 8.4 Q436.8 12.8 435.3 13.3 Q433.8 12.8 431.8 8.4Z" fill="#86a8ec" opacity="0.6"/><path d="M441.6 8.4 Q443.6 4.4 445.1 4.0 Q446.6 4.4 448.6 8.4 Q446.6 12.4 445.1 12.8 Q443.6 12.4 441.6 8.4Z" fill="#86a8ec" opacity="0.6"/><path d="M451.3 8.4 Q453.3 5.1 454.8 4.7 Q456.3 5.1 458.3 8.4 Q456.3 11.7 454.8 12.1 Q453.3 11.7 451.3 8.4Z" fill="#86a8ec" opacity="0.6"/><path d="M461.1 8.4 Q463.1 4.5 464.6 4.1 Q466.1 4.5 468.1 8.4 Q466.1 12.3 464.6 12.7 Q463.1 12.3 461.1 8.4Z" fill="#86a8ec" opacity="0.6"/><path d="M470.8 8.4 Q472.8 4.0 474.3 3.5 Q475.8 4.0 477.8 8.4 Q475.8 12.8 474.3 13.3 Q472.8 12.8 470.8 8.4Z" fill="#86a8ec" opacity="0.6"/><path d="M480.6 8.4 Q482.6 4.7 484.1 4.3 Q485.6 4.7 487.6 8.4 Q485.6 12.1 484.1 12.5 Q482.6 12.1 480.6 8.4Z" fill="#86a8ec" opacity="0.6"/><path d="M490.3 8.4 Q492.3 5.0 493.8 4.6 Q495.3 5.0 497.3 8.4 Q495.3 11.8 493.8 12.2 Q492.3 11.8 490.3 8.4Z" fill="#86a8ec" opacity="0.6"/><path d="M500.1 8.4 Q502.1 4.2 503.6 3.8 Q505.1 4.2 507.1 8.4 Q505.1 12.6 503.6 13.0 Q502.1 12.6 500.1 8.4Z" fill="#86a8ec" opacity="0.6"/><path d="M509.8 8.4 Q511.8 4.1 513.3 3.6 Q514.8 4.1 516.8 8.4 Q514.8 12.7 513.3 13.2 Q511.8 12.7 509.8 8.4Z" fill="#86a8ec" opacity="0.6"/><path d="M519.5 8.4 Q521.5 4.9 523.0 4.5 Q524.5 4.9 526.5 8.4 Q524.5 11.9 523.0 12.3 Q521.5 11.9 519.5 8.4Z" fill="#86a8ec" opacity="0.6"/><path d="M529.3 8.4 Q531.3 4.8 532.8 4.4 Q534.3 4.8 536.3 8.4 Q534.3 12.0 532.8 12.4 Q531.3 12.0 529.3 8.4Z" fill="#86a8ec" opacity="0.6"/><path d="M539.0 8.4 Q541.0 4.0 542.5 3.6 Q544.0 4.0 546.0 8.4 Q544.0 12.8 542.5 13.2 Q541.0 12.8 539.0 8.4Z" fill="#86a8ec" opacity="0.6"/><path d="M548.8 8.4 Q550.8 4.4 552.3 3.9 Q553.8 4.4 555.8 8.4 Q553.8 12.4 552.3 12.9 Q550.8 12.4 548.8 8.4Z" fill="#86a8ec" opacity="0.6"/><path d="M558.5 8.4 Q560.5 5.1 562.0 4.7 Q563.5 5.1 565.5 8.4 Q563.5 11.7 562.0 12.1 Q560.5 11.7 558.5 8.4Z" fill="#86a8ec" opacity="0.6"/><path d="M568.3 8.4 Q570.3 4.6 571.8 4.1 Q573.3 4.6 575.3 8.4 Q573.3 12.2 571.8 12.7 Q570.3 12.2 568.3 8.4Z" fill="#86a8ec" opacity="0.6"/><path d="M578.0 8.4 Q580.0 4.0 581.5 3.5 Q583.0 4.0 585.0 8.4 Q583.0 12.8 581.5 13.3 Q580.0 12.8 578.0 8.4Z" fill="#86a8ec" opacity="0.6"/><path d="M587.8 8.4 Q589.8 4.6 591.3 4.2 Q592.8 4.6 594.8 8.4 Q592.8 12.2 591.3 12.6 Q589.8 12.2 587.8 8.4Z" fill="#86a8ec" opacity="0.6"/><path d="M597.5 8.4 Q599.5 5.0 601.0 4.7 Q602.5 5.0 604.5 8.4 Q602.5 11.8 601.0 12.1 Q599.5 11.8 597.5 8.4Z" fill="#86a8ec" opacity="0.6"/><path d="M607.3 8.4 Q609.3 4.3 610.8 3.8 Q612.3 4.3 614.3 8.4 Q612.3 12.5 610.8 13.0 Q609.3 12.5 607.3 8.4Z" fill="#86a8ec" opacity="0.6"/><path d="M617.0 8.4 Q619.0 4.1 620.5 3.6 Q622.0 4.1 624.0 8.4 Q622.0 12.7 620.5 13.2 Q619.0 12.7 617.0 8.4Z" fill="#86a8ec" opacity="0.6"/><path d="M626.8 8.4 Q628.8 4.9 630.3 4.5 Q631.8 4.9 633.8 8.4 Q631.8 11.9 630.3 12.3 Q628.8 11.9 626.8 8.4Z" fill="#86a8ec" opacity="0.6"/><path d="M636.5 8.4 Q638.5 4.9 640.0 4.5 Q641.5 4.9 643.5 8.4 Q641.5 11.9 640.0 12.3 Q638.5 11.9 636.5 8.4Z" fill="#86a8ec" opacity="0.6"/><path d="M646.3 8.4 Q648.3 4.1 649.8 3.6 Q651.3 4.1 653.3 8.4 Q651.3 12.7 649.8 13.2 Q648.3 12.7 646.3 8.4Z" fill="#86a8ec" opacity="0.6"/><path d="M656.0 8.4 Q658.0 4.3 659.5 3.8 Q661.0 4.3 663.0 8.4 Q661.0 12.5 659.5 13.0 Q658.0 12.5 656.0 8.4Z" fill="#86a8ec" opacity="0.6"/><path d="M665.8 8.4 Q667.8 5.0 669.3 4.7 Q670.8 5.0 672.8 8.4 Q670.8 11.8 669.3 12.1 Q667.8 11.8 665.8 8.4Z" fill="#86a8ec" opacity="0.6"/><path d="M675.5 8.4 Q677.5 4.7 679.0 4.2 Q680.5 4.7 682.5 8.4 Q680.5 12.1 679.0 12.6 Q677.5 12.1 675.5 8.4Z" fill="#86a8ec" opacity="0.6"/><path d="M685.3 8.4 Q687.3 4.0 688.8 3.5 Q690.3 4.0 692.3 8.4 Q690.3 12.8 688.8 13.3 Q687.3 12.8 685.3 8.4Z" fill="#86a8ec" opacity="0.6"/><path d="M695.0 8.4 Q697.0 4.5 698.5 4.1 Q700.0 4.5 702.0 8.4 Q700.0 12.3 698.5 12.7 Q697.0 12.3 695.0 8.4Z" fill="#86a8ec" opacity="0.6"/><path d="M704.8 8.4 Q706.8 5.1 708.3 4.7 Q709.8 5.1 711.8 8.4 Q709.8 11.7 708.3 12.1 Q706.8 11.7 704.8 8.4Z" fill="#86a8ec" opacity="0.6"/><path d="M714.5 8.4 Q716.5 4.4 718.0 3.9 Q719.5 4.4 721.5 8.4 Q719.5 12.4 718.0 12.9 Q716.5 12.4 714.5 8.4Z" fill="#86a8ec" opacity="0.6"/><path d="M724.3 8.4 Q726.3 4.0 727.8 3.6 Q729.3 4.0 731.3 8.4 Q729.3 12.8 727.8 13.2 Q726.3 12.8 724.3 8.4Z" fill="#86a8ec" opacity="0.6"/><path d="M734.0 8.4 Q736.0 4.8 737.5 4.4 Q739.0 4.8 741.0 8.4 Q739.0 12.0 737.5 12.4 Q736.0 12.0 734.0 8.4Z" fill="#86a8ec" opacity="0.6"/><path d="M743.8 8.4 Q745.8 5.0 747.3 4.6 Q748.8 5.0 750.8 8.4 Q748.8 11.8 747.3 12.2 Q745.8 11.8 743.8 8.4Z" fill="#86a8ec" opacity="0.6"/><path d="M753.5 8.4 Q755.5 4.1 757.0 3.7 Q758.5 4.1 760.5 8.4 Q758.5 12.7 757.0 13.1 Q755.5 12.7 753.5 8.4Z" fill="#86a8ec" opacity="0.6"/><path d="M763.3 8.4 Q765.3 4.2 766.8 3.7 Q768.3 4.2 770.3 8.4 Q768.3 12.6 766.8 13.1 Q765.3 12.6 763.3 8.4Z" fill="#86a8ec" opacity="0.6"/><path d="M773.0 8.4 Q775.0 5.0 776.5 4.6 Q778.0 5.0 780.0 8.4 Q778.0 11.8 776.5 12.2 Q775.0 11.8 773.0 8.4Z" fill="#86a8ec" opacity="0.6"/><rect x="98" y="7.9" width="640" height="1" fill="#86a8ec" opacity="0.6"/></g></svg>
<svg style="left:200.5px;top:558px" width="6" height="8" viewBox="0 0 6 8" fill="none" stroke="#d8e2fa" stroke-width="0.6"><circle cx="1.2" cy="6.6" r="0.9"/><circle cx="4.6" cy="5.8" r="0.9"/><path d="M2.1 6.6 V1.4 L5.5 0.6 V5.8"/></svg>
<div class="t" style="left:211.4px;top:559px;font-size:7.05px;color:#eef2fc;-webkit-text-stroke:0.1px #eef2fc">Upbeat Funky Good Times</div>
<div class="a" style="left:491.6px;top:466px;width:1.1px;height:114px;background:#dcdce4"></div>
<svg style="left:488.5px;top:462px" width="7" height="8" viewBox="0 0 7 8"><path d="M0.5 1 Q0.5 0.2 1.3 0.2 H5.7 Q6.5 0.2 6.5 1 V4.5 L3.5 7.5 L0.5 4.5Z" fill="#f0f0f4"/></svg>
<div class="a" style="left:926px;top:22px;width:36px;height:558px;background:#1e1e29"></div>
<div class="a" style="left:926px;top:22px;width:1px;height:387px;background:#24242f"></div>
<!-- right panel -->
<svg style="left:938.5px;top:30.5px" width="12" height="9" viewBox="0 0 12 9" fill="none" stroke="#a4a4b0" stroke-width="0.8"><path d="M0.5 3 H2.6 L6.2 0.6 V8.4 L2.6 6 H0.5Z"/><path d="M8 2.6 Q9 4.5 8 6.4 M9.6 1.2 Q11.4 4.5 9.6 7.8"/></svg>
<div class="t" style="left:926px;top:44.4px;width:36px;text-align:center;font-size:4.8px;color:#8b8b98">Audio</div>
<svg style="left:938.5px;top:61px" width="11" height="11" viewBox="0 0 11 11"><circle cx="5.5" cy="5.5" r="4.9" fill="none" stroke="#a4a4b0" stroke-width="0.85"/><path d="M5.5 0.6 A4.9 4.9 0 0 1 5.5 10.4Z" fill="#a4a4b0"/></svg>
<div class="t" style="left:926px;top:75.5px;width:36px;text-align:center;font-size:4.8px;color:#8b8b98">Colour</div>
<svg style="left:938.5px;top:93.5px" width="11" height="10" viewBox="0 0 11 10" fill="none" stroke="#a4a4b0" stroke-width="0.85"><rect x="0.5" y="0.5" width="10" height="9" rx="1.2"/><path d="M4 0.5 V9.5 M4 6 H10.5"/></svg>
<div class="t" style="left:926px;top:107.3px;width:36px;text-align:center;font-size:4.8px;color:#8b8b98">Layout</div>
<svg style="left:938.5px;top:125px" width="11" height="11" viewBox="0 0 11 11" fill="none" stroke="#a4a4b0" stroke-width="0.8"><rect x="1.8" y="1.8" width="7.4" height="7.4"/><path d="M0.3 1.8 H1.8 V0.3 M9.2 0.3 V1.8 H10.7 M10.7 9.2 H9.2 V10.7 M1.8 10.7 V9.2 H0.3"/></svg>
<div class="t" style="left:926px;top:140.4px;width:36px;text-align:center;font-size:4.5px;color:#8b8b98">Transform</div>
<svg style="left:939px;top:157.5px" width="10" height="10" viewBox="0 0 10 10" fill="none" stroke="#a4a4b0" stroke-width="0.85"><path d="M0.8 9.2 L6.5 3.5 M5.8 2.5 L7.5 4.2"/><path d="M7 0.3 V2 M6.2 1.1 H7.8 M9 3 V4.6 M8.2 3.8 H9.8 M2.5 1 V2.4 M1.8 1.7 H3.2" stroke-width="0.6"/></svg>
<div class="t" style="left:926px;top:172.0px;width:36px;text-align:center;font-size:4.8px;color:#8b8b98">Filters</div>
<svg style="left:938.5px;top:188.5px" width="11" height="11" viewBox="0 0 11 11" fill="none" stroke="#a4a4b0" stroke-width="0.85"><circle cx="5.5" cy="5.5" r="4.9"/><path d="M5.5 0.6 V10.4 M7 1 V10 M8.3 1.8 V9.2" stroke-width="0.6"/></svg>
<div class="t" style="left:926px;top:202.7px;width:36px;text-align:center;font-size:4.8px;color:#8b8b98">Fade</div>
<svg style="left:938.5px;top:221.5px" width="11" height="8" viewBox="0 0 11 8" fill="none" stroke="#a4a4b0" stroke-width="0.85"><path d="M0.8 6 A4.8 4.8 0 0 1 10.2 6"/><path d="M5.2 6.5 L7.6 2.3" stroke-width="1.1"/></svg>
<div class="t" style="left:926px;top:234.3px;width:36px;text-align:center;font-size:4.8px;color:#8b8b98">Speed</div>
<svg style="left:940px;top:253px" width="8" height="10" viewBox="0 0 8 10" fill="none" stroke="#a4a4b0" stroke-width="0.8"><path d="M0.4 1.6 V0.4 H7.6 V1.6 M4 0.4 V9.4 M2.8 9.4 H5.2"/></svg>
<div class="t" style="left:926px;top:268.4px;width:36px;text-align:center;font-size:4.8px;color:#8b8b98">Text</div>
<!-- right collapse tab -->
<svg style="left:919.5px;top:206px" width="8" height="24" viewBox="0 0 8 24"><path d="M7 0 Q7 2 5 3 Q1 4 1 7 V17 Q1 20 5 21 Q7 22 7 24" fill="#1e1e29" stroke="#2a2a35" stroke-width="0.8"/><path d="M4.8 9.5 L3 12 L4.8 14.5" fill="none" stroke="#5a5a66" stroke-width="0.6"/></svg>

<!-- taskbar content -->
<svg style="left:13.5px;top:585.5px" width="16" height="14" viewBox="0 0 16 14">
  <defs><radialGradient id="sun" cx="0.3" cy="0.25" r="0.85"><stop offset="0" stop-color="#ffe46a"/><stop offset="0.6" stop-color="#fbb61e"/><stop offset="1" stop-color="#f08800"/></radialGradient>
  <linearGradient id="cld" x1="0" y1="0" x2="0" y2="1"><stop offset="0" stop-color="#ffffff"/><stop offset="1" stop-color="#bcd6ec"/></linearGradient></defs>
  <circle cx="6.2" cy="6.6" r="6.3" fill="url(#sun)"/>
  <path d="M7.2 12.6 Q5 12.6 5 10.6 Q5.1 8.8 6.9 8.7 Q7.5 6 10.2 6.1 Q12.7 6.2 13.2 8.5 Q15.6 8.5 15.7 10.6 Q15.7 12.6 13.5 12.6Z" fill="url(#cld)"/>
</svg>
<div class="t" style="left:29.9px;top:586.7px;font-size:5.6px;color:#111111;-webkit-text-stroke:0.05px #111">68°F</div>
<div class="t" style="left:29.9px;top:593.6px;font-size:5.6px;color:#5a5a5a">Mostly Sunny</div>

<!-- windows logo -->
<svg style="left:399.8px;top:586.3px" width="12.2" height="11.4" viewBox="0 0 12.2 11.4">
  <defs><linearGradient id="wg" x1="0" y1="0" x2="1" y2="1"><stop offset="0" stop-color="#4cc2ff"/><stop offset="1" stop-color="#0a78d4"/></linearGradient></defs>
  <rect x="0" y="0" width="5.8" height="5.4" fill="url(#wg)"/><rect x="6.4" y="0" width="5.8" height="5.4" fill="url(#wg)"/>
  <rect x="0" y="6" width="5.8" height="5.4" fill="url(#wg)"/><rect x="6.4" y="6" width="5.8" height="5.4" fill="url(#wg)"/>
</svg>
<!-- search -->
<svg style="left:422.5px;top:586px" width="12" height="12" viewBox="0 0 12 12" fill="none" stroke="#1a1a1a" stroke-width="1.3"><circle cx="4.9" cy="4.9" r="4.1"/><path d="M7.9 7.9 L11.3 11.3"/></svg>
<!-- task view -->
<svg style="left:443.5px;top:586.5px" width="13" height="11" viewBox="0 0 13 11"><rect x="4.5" y="0.3" width="8" height="7" rx="0.8" fill="#c8c8cc"/><rect x="0.3" y="3.6" width="8" height="7" rx="0.8" fill="#1c1c1c"/></svg>
<!-- chat -->
<svg style="left:465.8px;top:586.3px" width="12" height="12" viewBox="0 0 12 12"><circle cx="6.2" cy="5.8" r="5.4" fill="#7b83eb"/><path d="M1.2 8 L0.3 11.6 L4 10.5Z" fill="#7b83eb"/><rect x="3.4" y="3.9" width="4.2" height="3.8" rx="0.6" fill="#fff"/><path d="M7.6 5.2 L9.2 4.2 V7.4 L7.6 6.4Z" fill="#fff"/></svg>
<!-- explorer -->
<svg style="left:487.8px;top:586.5px" width="12.5" height="11" viewBox="0 0 12.5 11"><path d="M0.3 1 Q0.3 0.3 1 0.3 H4.5 L5.6 1.5 H11.5 Q12.2 1.5 12.2 2.2 V10.3 Q12.2 10.8 11.5 10.8 H1 Q0.3 10.8 0.3 10.1Z" fill="#f3b72c"/><rect x="0.3" y="3" width="11.9" height="7.8" rx="0.6" fill="#ffd45a"/><rect x="2.5" y="7.3" width="7.5" height="2.2" rx="0.5" fill="#2a7bd6"/></svg>
<!-- edge -->
<svg style="left:509.7px;top:586.3px" width="12.2" height="12" viewBox="0 0 12.2 12"><defs><linearGradient id="eg" x1="0" y1="1" x2="1" y2="0"><stop offset="0" stop-color="#0c59a4"/><stop offset="0.6" stop-color="#1f9fe8"/><stop offset="1" stop-color="#56d36f"/></linearGradient></defs><circle cx="6.1" cy="6" r="5.8" fill="url(#eg)"/><path d="M3.2 7 Q3.5 4 6.8 4 Q9.6 4.2 9.6 6.3 Q9.6 7.5 7.6 7.5 H5.2 Q5.6 9.8 8.4 9.6 Q6 11.5 3.8 9.6 Q3 8.6 3.2 7Z" fill="#e8f4fb"/></svg>
<!-- store -->
<svg style="left:531.7px;top:586.3px" width="12.8" height="12" viewBox="0 0 12.8 12"><path d="M4 2.5 Q4 0.4 6.4 0.4 Q8.8 0.4 8.8 2.5" fill="none" stroke="#2a5aa0" stroke-width="0.8"/><rect x="0.4" y="2.3" width="12" height="9.4" rx="1.2" fill="#1b4d8f"/><rect x="4.2" y="4.6" width="2" height="2" fill="#f25022"/><rect x="6.6" y="4.6" width="2" height="2" fill="#7fba00"/><rect x="4.2" y="7" width="2" height="2" fill="#00a4ef"/><rect x="6.6" y="7" width="2" height="2" fill="#ffb900"/></svg>
<!-- clipchamp active -->
<div class="a" style="left:550.4px;top:583px;width:18.7px;height:18.6px;border-radius:2.5px;background:#f5f8fc"></div>
<svg style="left:553.5px;top:586px" width="13" height="12" viewBox="0 0 13 12"><defs><linearGradient id="tcg" x1="0" y1="0" x2="0" y2="1"><stop offset="0" stop-color="#d87be8"/><stop offset="0.55" stop-color="#9c62ec"/><stop offset="1" stop-color="#5b52ee"/></linearGradient></defs><path d="M0.5 3.2 L11.5 0.3 L12.3 2.3 L1.2 4.6Z" fill="#b86ee8"/><rect x="0.5" y="4.8" width="12" height="7" rx="0.5" fill="url(#tcg)"/></svg>
<div class="a" style="left:556.3px;top:600.4px;width:7.9px;height:1.2px;border-radius:1px;background:#2b79d8"></div>

<!-- tray -->
<svg style="left:851.5px;top:590.7px" width="6.5" height="4" viewBox="0 0 6.5 4"><path d="M0.5 3.5 L3.25 0.7 L6 3.5" fill="none" stroke="#2a2a2a" stroke-width="0.8"/></svg>
<svg style="left:867px;top:588.5px" width="11.5" height="8" viewBox="0 0 11.5 8"><path d="M2.5 7.6 Q0.2 7.6 0.3 5.6 Q0.4 3.8 2.4 3.8 Q3 0.5 6 0.5 Q8.8 0.6 9.2 3.4 Q11.2 3.6 11.2 5.6 Q11.2 7.6 9 7.6Z" fill="#7d7d80"/></svg>
<svg style="left:882px;top:588.8px" width="8" height="7" viewBox="0 0 8 7" fill="none" stroke="#2a2a2a" stroke-width="0.75"><path d="M0.4 2.4 Q4 -0.6 7.6 2.4 M1.5 3.7 Q4 1.7 6.5 3.7 M2.6 5 Q4 3.9 5.4 5"/><circle cx="4" cy="6.2" r="0.5" fill="#2a2a2a"/></svg>
<svg style="left:894px;top:588.6px" width="8.5" height="7.5" viewBox="0 0 8.5 7.5" fill="none" stroke="#2a2a2a" stroke-width="0.75"><path d="M0.4 2.4 H2 L4.6 0.4 V7.1 L2 5.1 H0.4Z M6 2.2 Q6.9 3.75 6 5.3 M7.2 1.2 Q8.6 3.75 7.2 6.3"/></svg>
<svg style="left:905.8px;top:589.5px" width="9" height="5.5" viewBox="0 0 9 5.5"><rect x="0.4" y="0.4" width="7.6" height="4.7" rx="1.4" fill="none" stroke="#2a2a2a" stroke-width="0.8"/><rect x="1.6" y="1.6" width="5.2" height="2.3" fill="#2a2a2a"/><rect x="8.1" y="1.8" width="0.8" height="1.9" fill="#2a2a2a"/></svg>
<div class="t" style="left:922px;top:585.5px;width:29.6px;text-align:right;font-size:6px;color:#1c1c1c">11:11 AM</div>
<div class="t" style="left:918px;top:593.6px;width:33.6px;text-align:right;font-size:5.8px;color:#1c1c1c">10/27/2022</div>

</body></html>
